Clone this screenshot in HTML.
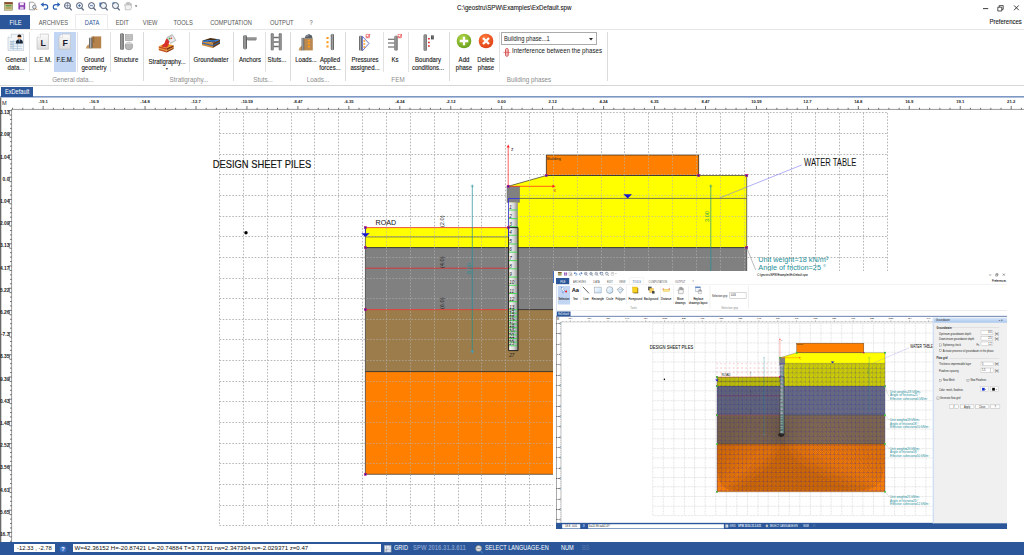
<!DOCTYPE html><html><head><meta charset="utf-8"><title>SPW - ExDefault.spw</title><style>html,body{margin:0;padding:0;}
body{width:1024px;height:555px;overflow:hidden;background:#fff;position:relative;font-family:"Liberation Sans",sans-serif;}
.app{position:absolute;left:0;top:0;width:1024px;height:555px;overflow:hidden;background:#fff;font-family:"Liberation Sans",sans-serif;color:#222;}
.cv{position:absolute;left:0;top:0;}
.abs{position:absolute;}
.top{position:absolute;left:0;top:0;width:1024px;height:29px;background:#fff;}
.qa{position:absolute;top:0;left:0;}
.title{position:absolute;left:456.5px;top:3px;font-size:7.2px;color:#161616;-webkit-text-stroke:0.1px #161616;white-space:nowrap;transform:scaleX(.86);transform-origin:0 50%;}
.tab{position:absolute;top:15px;height:14.6px;line-height:15.2px;font-size:7.2px;color:#555;text-align:center;white-space:nowrap;}
.tab span{display:inline-block;transform:scaleX(.8);transform-origin:50% 50%;margin:0 -10px;}
.tab.file{left:0;width:30.4px;background:#2b579a;color:#fff;height:14.2px;}
.tab.act{color:#2b579a;background:#fff;box-shadow:0 0 0 0.6px #dedede;height:15.2px;}
.pref{position:absolute;right:2.3px;top:17px;font-size:7.2px;color:#111;transform:scaleX(.83);transform-origin:100% 50%;-webkit-text-stroke:0.1px #111;}
.ribbon{position:absolute;left:0;top:29px;width:1024px;height:57px;background:#fff;border-top:1px solid #e6e6e6;border-bottom:1px solid #d6d6d6;box-sizing:border-box;}
.ri{position:absolute;top:2px;height:40px;text-align:center;font-size:7.2px;line-height:8px;color:#161616;white-space:nowrap;-webkit-text-stroke:0.12px #161616;}
.ri.hl{background:#c2d5f2;}
.ri svg{position:absolute;top:0;left:50%;}
.ri .lb{position:absolute;left:-20px;right:-20px;top:24px;text-align:center;transform:scaleX(.84);transform-origin:50% 50%;}
.sep{position:absolute;top:2.4px;width:0.7px;height:39.6px;background:#e2e2e2;}
.gsep{position:absolute;top:2.4px;width:0.7px;height:48.6px;background:#dcdcdc;}
.gl{position:absolute;top:45.6px;font-size:7px;color:#8c8c8c;white-space:nowrap;transform:translateX(-50%) scaleX(.9);}
.doctab{position:absolute;left:0.8px;top:86.6px;width:32.6px;height:10px;background:#2b579a;color:#fff;font-size:7px;line-height:10.2px;text-align:center;}
.doctab span{display:inline-block;transform:scaleX(.8);margin:0 -6px;}
.status{position:absolute;left:0;top:542.2px;width:1024px;height:12.8px;background:#2b579a;color:#fff;font-size:6.8px;line-height:12.6px;white-space:nowrap;}
.status span.abs{transform:scaleX(.82);transform-origin:0 50%;}
.sbox{position:absolute;top:2.1px;height:8px;background:#fff;color:#111;line-height:8.4px;font-size:5.2px;box-sizing:border-box;padding-left:1.2px;overflow:hidden;}
.insetwrap{position:absolute;left:552.7px;top:270.8px;width:471.3px;height:271.4px;background:#fff;overflow:hidden;}
.insetclip{position:absolute;left:3.7px;top:0.4px;width:451.2px;height:257.4px;overflow:hidden;}
.insetscale{position:absolute;left:0;top:0;width:1024px;height:555px;transform-origin:0 0;transform:scale(0.4406,0.4655);}
.sx{display:inline-block;transform:scaleX(.8);transform-origin:0 50%;white-space:nowrap;}
.insetscale .sbox{top:2.8px;height:8.6px;}
</style></head><body><div class="app"><svg class="cv" width="1024" height="555" viewBox="0 0 1024 555" font-family="'Liberation Sans', sans-serif"><defs><linearGradient id="pg" x1="0" x2="1" y1="0" y2="0"><stop offset="0" stop-color="#fbfbfb"/><stop offset="0.55" stop-color="#d8d8d8"/><stop offset="1" stop-color="#8a8a8a"/></linearGradient></defs><defs><clipPath id="sc"><path d="M365.4 227.6H508.2V186.3L546.3 175.5V155H698.7V175.5H746.7V474.3H365.4Z"/></clipPath><clipPath id="nsc"><path clip-rule="evenodd" d="M0 0H1024V555H0ZM365.4 227.6H508.2V186.3L546.3 175.5V155H698.7V175.5H746.7V474.3H365.4Z"/></clipPath></defs><rect x="365.4" y="227.6" width="143" height="20" fill="#ffff00"/><polygon points="508.2,186.3 546.3,175.5 746.7,175.5 746.7,247.6 508.2,247.6" fill="#ffff00"/><rect x="365.4" y="247.6" width="381.3" height="62" fill="#808080"/><rect x="365.4" y="309.6" width="381.3" height="62" fill="#9c7c4b"/><rect x="365.4" y="371.6" width="381.3" height="102.7" fill="#ff8000"/><rect x="546.3" y="155" width="152.4" height="20.5" fill="#ff8000" stroke="#3a3020" stroke-width="0.8"/><path d="M365.4 227.6V474.3H746.7V175.5H546.3L508.2 186.3" fill="none" stroke="#333" stroke-width="0.7"/><path d="M365.4 247.6H746.7M508 309.6H746.7M365.4 371.6H746.7" fill="none" stroke="#2a2a2a" stroke-width="0.9"/><path d="M365.4 227.6H508.4M365.4 268.2H508.4M365.4 309.6H508.4" fill="none" stroke="#e8262a" stroke-width="0.8"/><path d="M365.4 236.9H508.4M519.6 198.4H746.7" fill="none" stroke="#555" stroke-width="0.8"/><g clip-path="url(#nsc)"><path d="M219.5 112.9V525.7M243.5 112.9V525.7M267.5 112.9V525.7M291.5 112.9V525.7M314.5 112.9V525.7M338.5 112.9V525.7M362.5 112.9V525.7M386.5 112.9V525.7M410.5 112.9V525.7M434.5 112.9V525.7M458.5 112.9V525.7M481.5 112.9V525.7M505.5 112.9V525.7M529.5 112.9V525.7M553.5 112.9V525.7M577.5 112.9V525.7M601.5 112.9V525.7M624.5 112.9V525.7M648.5 112.9V525.7M672.5 112.9V525.7M696.5 112.9V525.7M720.5 112.9V525.7M744.5 112.9V525.7M768.5 112.9V525.7M791.5 112.9V525.7M815.5 112.9V525.7M839.5 112.9V525.7M863.5 112.9V525.7M887.5 112.9V525.7M219.5 112.5H887.3M219.5 133.5H887.3M219.5 154.5H887.3M219.5 174.5H887.3M219.5 195.5H887.3M219.5 216.5H887.3M219.5 236.5H887.3M219.5 257.5H887.3M219.5 278.5H887.3M219.5 298.5H887.3M219.5 319.5H887.3M219.5 339.5H887.3M219.5 360.5H887.3M219.5 381.5H887.3M219.5 401.5H887.3M219.5 422.5H887.3M219.5 443.5H887.3M219.5 463.5H887.3M219.5 484.5H887.3M219.5 505.5H887.3M219.5 525.5H887.3" fill="none" stroke="#b6b6b6" stroke-width="1" stroke-dasharray="1.6 1.6"/></g><g clip-path="url(#sc)" opacity="0.6"><path d="M219.5 112.9V525.7M243.5 112.9V525.7M267.5 112.9V525.7M291.5 112.9V525.7M314.5 112.9V525.7M338.5 112.9V525.7M362.5 112.9V525.7M386.5 112.9V525.7M410.5 112.9V525.7M434.5 112.9V525.7M458.5 112.9V525.7M481.5 112.9V525.7M505.5 112.9V525.7M529.5 112.9V525.7M553.5 112.9V525.7M577.5 112.9V525.7M601.5 112.9V525.7M624.5 112.9V525.7M648.5 112.9V525.7M672.5 112.9V525.7M696.5 112.9V525.7M720.5 112.9V525.7M744.5 112.9V525.7M768.5 112.9V525.7M791.5 112.9V525.7M815.5 112.9V525.7M839.5 112.9V525.7M863.5 112.9V525.7M887.5 112.9V525.7M219.5 112.5H887.3M219.5 133.5H887.3M219.5 154.5H887.3M219.5 174.5H887.3M219.5 195.5H887.3M219.5 216.5H887.3M219.5 236.5H887.3M219.5 257.5H887.3M219.5 278.5H887.3M219.5 298.5H887.3M219.5 319.5H887.3M219.5 339.5H887.3M219.5 360.5H887.3M219.5 381.5H887.3M219.5 401.5H887.3M219.5 422.5H887.3M219.5 443.5H887.3M219.5 463.5H887.3M219.5 484.5H887.3M219.5 505.5H887.3M219.5 525.5H887.3" fill="none" stroke="#b4b4b4" stroke-width="1" stroke-dasharray="1.6 1.6"/></g><rect x="507" y="186.4" width="12.6" height="16" fill="#808080" stroke="#6a6a6a" stroke-width="0.5"/><rect x="508.8" y="202.4" width="9" height="148.2" fill="url(#pg)"/><path d="M508.8 210H518M508.8 218.6H518M508.8 226.7H518M508.8 235.3H518M508.8 244H518M508.8 252.2H518M508.8 260.6H518M508.8 268.8H518M508.8 277.1H518M508.8 285.3H518M508.8 293.5H518M508.8 301.6H518M508.8 309.7H518M508.8 313.2H518M508.8 316.82H518M508.8 320.44H518M508.8 324.06H518M508.8 327.68H518M508.8 331.3H518M508.8 334.92H518M508.8 338.54H518M508.8 342.16H518M508.8 345.78H518" stroke="#43d84f" stroke-width="0.9" fill="none"/><text x="509.2" y="209" font-size="4.6" fill="#222" font-style="italic">1</text><text x="509.2" y="217.6" font-size="4.6" fill="#222" font-style="italic">2</text><text x="509.2" y="225.7" font-size="4.6" fill="#222" font-style="italic">3</text><text x="509.2" y="234.3" font-size="4.6" fill="#222" font-style="italic">4</text><text x="509.2" y="243" font-size="4.6" fill="#222" font-style="italic">5</text><text x="509.2" y="251.2" font-size="4.6" fill="#222" font-style="italic">6</text><text x="509.2" y="259.6" font-size="4.6" fill="#222" font-style="italic">7</text><text x="509.2" y="267.8" font-size="4.6" fill="#222" font-style="italic">8</text><text x="509.2" y="276.1" font-size="4.6" fill="#222" font-style="italic">9</text><text x="509.2" y="284.3" font-size="4.6" fill="#222" font-style="italic">10</text><text x="509.2" y="292.5" font-size="4.6" fill="#222" font-style="italic">11</text><text x="509.2" y="300.6" font-size="4.6" fill="#222" font-style="italic">12</text><text x="509.2" y="308.7" font-size="4.6" fill="#222" font-style="italic">13</text><text x="509.2" y="312.2" font-size="4.6" fill="#222" font-style="italic">14</text><text x="509.2" y="315.82" font-size="4.6" fill="#222" font-style="italic">15</text><text x="509.2" y="319.44" font-size="4.6" fill="#222" font-style="italic">16</text><text x="509.2" y="323.06" font-size="4.6" fill="#222" font-style="italic">17</text><text x="509.2" y="326.68" font-size="4.6" fill="#222" font-style="italic">18</text><text x="509.2" y="330.3" font-size="4.6" fill="#222" font-style="italic">19</text><text x="509.2" y="333.92" font-size="4.6" fill="#222" font-style="italic">20</text><text x="509.2" y="337.54" font-size="4.6" fill="#222" font-style="italic">21</text><text x="509.2" y="341.16" font-size="4.6" fill="#222" font-style="italic">22</text><text x="509.2" y="344.78" font-size="4.6" fill="#222" font-style="italic">23</text><text x="509.2" y="356.6" font-size="4.6" fill="#222" font-style="italic">27</text><path d="M508.6 227.6H518V350.6H508.6Z" fill="none" stroke="#111" stroke-width="0.9"/><path d="M519.6 198.5H508.5V237" fill="none" stroke="#2a2af0" stroke-width="0.8"/><path d="M508.2 186.3V146M508.2 186.3H553" stroke="#ff2020" stroke-width="0.7" fill="none"/><path d="M508.2 144.4l-1.5 3.2h3zM555.6 186.3l-3.2-1.5v3z" fill="#ff2020"/><text x="511" y="150.5" font-size="5" fill="#333">z</text><text x="553.5" y="192" font-size="5" fill="#c33">x</text><rect x="364.3" y="226.5" width="2.2" height="2.2" fill="#2020c0" stroke="#e01060" stroke-width="0.5"/><rect x="364.3" y="246.5" width="2.2" height="2.2" fill="#2020c0" stroke="#e01060" stroke-width="0.5"/><rect x="364.3" y="308.5" width="2.2" height="2.2" fill="#2020c0" stroke="#e01060" stroke-width="0.5"/><rect x="364.3" y="473.2" width="2.2" height="2.2" fill="#2020c0" stroke="#e01060" stroke-width="0.5"/><rect x="507.3" y="226.5" width="2.2" height="2.2" fill="#2020c0" stroke="#e01060" stroke-width="0.5"/><rect x="507.1" y="185.2" width="2.2" height="2.2" fill="#2020c0" stroke="#e01060" stroke-width="0.5"/><rect x="545.2" y="174.4" width="2.2" height="2.2" fill="#2020c0" stroke="#e01060" stroke-width="0.5"/><rect x="697.6" y="174.4" width="2.2" height="2.2" fill="#2020c0" stroke="#e01060" stroke-width="0.5"/><rect x="745.6" y="174.4" width="2.2" height="2.2" fill="#2020c0" stroke="#e01060" stroke-width="0.5"/><rect x="745.6" y="246.5" width="2.2" height="2.2" fill="#2020c0" stroke="#e01060" stroke-width="0.5"/><path d="M361.2 233.2h8.6l-4.3 3.7z" fill="#1515d8"/><path d="M365.5 228.5v4.5" stroke="#1515d8" stroke-width="0.6"/><path d="M623.4 194.3h8.6l-4.3 4.1z" fill="#1515d8"/><path d="M472.3 186V351M710.8 186V303" stroke="#1d8f99" stroke-width="0.7" fill="none"/><path d="M470.8 186h3M472.3 184.4v3M709.3 186h3M710.8 184.4v3" stroke="#1d8f99" stroke-width="0.5" fill="none"/><path d="M472.3 353.4l-1.6-2.6h3.2z" fill="#3aa0d0"/><text transform="translate(470.6 274) rotate(-90)" font-size="5.6" fill="#1d8f99">8.00</text><text transform="translate(708.6 222) rotate(-90)" font-size="5.6" fill="#2a9a50">3.00</text><text transform="translate(443.6 227) rotate(-90)" font-size="5.6" fill="#222">(2.0)</text><text transform="translate(443.6 268) rotate(-90)" font-size="5.6" fill="#222">(4.0)</text><text transform="translate(443.6 309) rotate(-90)" font-size="5.6" fill="#222">(6.0)</text><text x="212.7" y="168.2" font-size="10.8" textLength="98.6" lengthAdjust="spacingAndGlyphs" fill="#111" stroke="#111" stroke-width="0.15">DESIGN SHEET PILES</text><text x="804" y="165.9" font-size="10.6" textLength="52.4" lengthAdjust="spacingAndGlyphs" fill="#111">WATER TABLE</text><text x="375.6" y="224.8" font-size="7.6" textLength="20.6" lengthAdjust="spacingAndGlyphs" fill="#111">ROAD</text><text x="547" y="160" font-size="3.9" fill="#222">Building</text><circle cx="246" cy="232.8" r="1.7" fill="#000"/><path d="M719.6 198L801.6 165" stroke="#7a7af0" stroke-width="0.6" fill="none"/><path d="M746.7 247.6L755.6 269.8" stroke="#777" stroke-width="0.5" fill="none"/><text x="758.3" y="261.7" font-size="7.3" fill="#1d8f99">Unit weight=18 kN/m³</text><text x="758.3" y="269.5" font-size="7.3" fill="#1d8f99">Angle of friction=25 °</text></svg><svg class="cv" width="1024" height="555" viewBox="0 0 1024 555" font-family="'Liberation Sans', sans-serif"><rect x="0" y="96.2" width="1024" height="1.3" fill="#5f7fb8"/><rect x="0" y="97.5" width="1.3" height="445" fill="#6a6a6a"/><path d="M11.6 542V109.4H1024" fill="none" stroke="#555" stroke-width="0.6"/><path d="M12.58 107.8V109.4M22.77 107.8V109.4M32.96 107.8V109.4M43.15 106V109.4M53.34 107.8V109.4M63.53 107.8V109.4M73.72 107.8V109.4M83.91 107.8V109.4M94.1 106V109.4M104.29 107.8V109.4M114.48 107.8V109.4M124.67 107.8V109.4M134.86 107.8V109.4M145.05 106V109.4M155.24 107.8V109.4M165.43 107.8V109.4M175.62 107.8V109.4M185.81 107.8V109.4M196 106V109.4M206.19 107.8V109.4M216.38 107.8V109.4M226.57 107.8V109.4M236.76 107.8V109.4M246.95 106V109.4M257.14 107.8V109.4M267.33 107.8V109.4M277.52 107.8V109.4M287.71 107.8V109.4M297.9 106V109.4M308.09 107.8V109.4M318.28 107.8V109.4M328.47 107.8V109.4M338.66 107.8V109.4M348.85 106V109.4M359.04 107.8V109.4M369.23 107.8V109.4M379.42 107.8V109.4M389.61 107.8V109.4M399.8 106V109.4M409.99 107.8V109.4M420.18 107.8V109.4M430.37 107.8V109.4M440.56 107.8V109.4M450.75 106V109.4M460.94 107.8V109.4M471.13 107.8V109.4M481.32 107.8V109.4M491.51 107.8V109.4M501.7 106V109.4M511.89 107.8V109.4M522.08 107.8V109.4M532.27 107.8V109.4M542.46 107.8V109.4M552.65 106V109.4M562.84 107.8V109.4M573.03 107.8V109.4M583.22 107.8V109.4M593.41 107.8V109.4M603.6 106V109.4M613.79 107.8V109.4M623.98 107.8V109.4M634.17 107.8V109.4M644.36 107.8V109.4M654.55 106V109.4M664.74 107.8V109.4M674.93 107.8V109.4M685.12 107.8V109.4M695.31 107.8V109.4M705.5 106V109.4M715.69 107.8V109.4M725.88 107.8V109.4M736.07 107.8V109.4M746.26 107.8V109.4M756.45 106V109.4M766.64 107.8V109.4M776.83 107.8V109.4M787.02 107.8V109.4M797.21 107.8V109.4M807.4 106V109.4M817.59 107.8V109.4M827.78 107.8V109.4M837.97 107.8V109.4M848.16 107.8V109.4M858.35 106V109.4M868.54 107.8V109.4M878.73 107.8V109.4M888.92 107.8V109.4M899.11 107.8V109.4M909.3 106V109.4M919.49 107.8V109.4M929.68 107.8V109.4M939.87 107.8V109.4M950.06 107.8V109.4M960.25 106V109.4M970.44 107.8V109.4M980.63 107.8V109.4M990.82 107.8V109.4M1001.01 107.8V109.4M1011.2 106V109.4M1021.39 107.8V109.4" stroke="#333" stroke-width="0.7" fill="none"/><text x="43.15" y="103.2" font-size="4.2" font-weight="bold" text-anchor="middle" fill="#222">-19.1</text><text x="94.1" y="103.2" font-size="4.2" font-weight="bold" text-anchor="middle" fill="#222">-16.9</text><text x="145.05" y="103.2" font-size="4.2" font-weight="bold" text-anchor="middle" fill="#222">-14.8</text><text x="196" y="103.2" font-size="4.2" font-weight="bold" text-anchor="middle" fill="#222">-12.7</text><text x="246.95" y="103.2" font-size="4.2" font-weight="bold" text-anchor="middle" fill="#222">-10.59</text><text x="297.9" y="103.2" font-size="4.2" font-weight="bold" text-anchor="middle" fill="#222">-8.47</text><text x="348.85" y="103.2" font-size="4.2" font-weight="bold" text-anchor="middle" fill="#222">-6.35</text><text x="399.8" y="103.2" font-size="4.2" font-weight="bold" text-anchor="middle" fill="#222">-4.24</text><text x="450.75" y="103.2" font-size="4.2" font-weight="bold" text-anchor="middle" fill="#222">-2.12</text><text x="501.7" y="103.2" font-size="4.2" font-weight="bold" text-anchor="middle" fill="#222">0.00</text><text x="552.65" y="103.2" font-size="4.2" font-weight="bold" text-anchor="middle" fill="#222">2.12</text><text x="603.6" y="103.2" font-size="4.2" font-weight="bold" text-anchor="middle" fill="#222">4.24</text><text x="654.55" y="103.2" font-size="4.2" font-weight="bold" text-anchor="middle" fill="#222">6.35</text><text x="705.5" y="103.2" font-size="4.2" font-weight="bold" text-anchor="middle" fill="#222">8.47</text><text x="756.45" y="103.2" font-size="4.2" font-weight="bold" text-anchor="middle" fill="#222">10.59</text><text x="807.4" y="103.2" font-size="4.2" font-weight="bold" text-anchor="middle" fill="#222">12.7</text><text x="858.35" y="103.2" font-size="4.2" font-weight="bold" text-anchor="middle" fill="#222">14.8</text><text x="909.3" y="103.2" font-size="4.2" font-weight="bold" text-anchor="middle" fill="#222">16.9</text><text x="960.25" y="103.2" font-size="4.2" font-weight="bold" text-anchor="middle" fill="#222">19.1</text><text x="1011.2" y="103.2" font-size="4.2" font-weight="bold" text-anchor="middle" fill="#222">21.2</text><text x="2" y="104.6" font-size="5.6" fill="#222">M</text><text x="9.4" y="114.1" font-size="4.9" font-weight="bold" text-anchor="end" fill="#222">3.13</text><path d="M9.4 110.8v4.5" stroke="#333" stroke-width="0.5"/><text x="9.4" y="136.3" font-size="4.9" font-weight="bold" text-anchor="end" fill="#222">2.09</text><path d="M9.4 133v4.5" stroke="#333" stroke-width="0.5"/><text x="9.4" y="158.5" font-size="4.9" font-weight="bold" text-anchor="end" fill="#222">1.04</text><path d="M9.4 155.2v4.5" stroke="#333" stroke-width="0.5"/><text x="9.4" y="180.7" font-size="4.9" font-weight="bold" text-anchor="end" fill="#222">0.0</text><path d="M9.4 177.4v4.5" stroke="#333" stroke-width="0.5"/><text x="9.4" y="202.9" font-size="4.9" font-weight="bold" text-anchor="end" fill="#222">-1.04</text><path d="M9.4 199.6v4.5" stroke="#333" stroke-width="0.5"/><text x="9.4" y="225.1" font-size="4.9" font-weight="bold" text-anchor="end" fill="#222">-2.09</text><path d="M9.4 221.8v4.5" stroke="#333" stroke-width="0.5"/><text x="9.4" y="247.3" font-size="4.9" font-weight="bold" text-anchor="end" fill="#222">-3.13</text><path d="M9.4 244v4.5" stroke="#333" stroke-width="0.5"/><text x="9.4" y="269.5" font-size="4.9" font-weight="bold" text-anchor="end" fill="#222">-4.17</text><path d="M9.4 266.2v4.5" stroke="#333" stroke-width="0.5"/><text x="9.4" y="291.7" font-size="4.9" font-weight="bold" text-anchor="end" fill="#222">-5.22</text><path d="M9.4 288.4v4.5" stroke="#333" stroke-width="0.5"/><text x="9.4" y="313.9" font-size="4.9" font-weight="bold" text-anchor="end" fill="#222">-6.26</text><path d="M9.4 310.6v4.5" stroke="#333" stroke-width="0.5"/><text x="9.4" y="336.1" font-size="4.9" font-weight="bold" text-anchor="end" fill="#222">-7.3</text><path d="M9.4 332.8v4.5" stroke="#333" stroke-width="0.5"/><text x="9.4" y="358.3" font-size="4.9" font-weight="bold" text-anchor="end" fill="#222">-8.35</text><path d="M9.4 355v4.5" stroke="#333" stroke-width="0.5"/><text x="9.4" y="380.5" font-size="4.9" font-weight="bold" text-anchor="end" fill="#222">-9.39</text><path d="M9.4 377.2v4.5" stroke="#333" stroke-width="0.5"/><text x="9.4" y="402.7" font-size="4.9" font-weight="bold" text-anchor="end" fill="#222">-10.43</text><path d="M9.4 399.4v4.5" stroke="#333" stroke-width="0.5"/><text x="9.4" y="424.9" font-size="4.9" font-weight="bold" text-anchor="end" fill="#222">-11.48</text><path d="M9.4 421.6v4.5" stroke="#333" stroke-width="0.5"/><text x="9.4" y="447.1" font-size="4.9" font-weight="bold" text-anchor="end" fill="#222">-12.52</text><path d="M9.4 443.8v4.5" stroke="#333" stroke-width="0.5"/><text x="9.4" y="469.3" font-size="4.9" font-weight="bold" text-anchor="end" fill="#222">-13.56</text><path d="M9.4 466v4.5" stroke="#333" stroke-width="0.5"/><text x="9.4" y="491.5" font-size="4.9" font-weight="bold" text-anchor="end" fill="#222">-14.61</text><path d="M9.4 488.2v4.5" stroke="#333" stroke-width="0.5"/><text x="9.4" y="513.7" font-size="4.9" font-weight="bold" text-anchor="end" fill="#222">-15.65</text><path d="M9.4 510.4v4.5" stroke="#333" stroke-width="0.5"/><text x="9.4" y="535.9" font-size="4.9" font-weight="bold" text-anchor="end" fill="#222">-16.7</text><path d="M9.4 532.6v4.5" stroke="#333" stroke-width="0.5"/><path d="M8.6 110.6H11.6M10 115.04H11.6M10 119.48H11.6M10 123.92H11.6M10 128.36H11.6M8.6 132.8H11.6M10 137.24H11.6M10 141.68H11.6M10 146.12H11.6M10 150.56H11.6M8.6 155H11.6M10 159.44H11.6M10 163.88H11.6M10 168.32H11.6M10 172.76H11.6M8.6 177.2H11.6M10 181.64H11.6M10 186.08H11.6M10 190.52H11.6M10 194.96H11.6M8.6 199.4H11.6M10 203.84H11.6M10 208.28H11.6M10 212.72H11.6M10 217.16H11.6M8.6 221.6H11.6M10 226.04H11.6M10 230.48H11.6M10 234.92H11.6M10 239.36H11.6M8.6 243.8H11.6M10 248.24H11.6M10 252.68H11.6M10 257.12H11.6M10 261.56H11.6M8.6 266H11.6M10 270.44H11.6M10 274.88H11.6M10 279.32H11.6M10 283.76H11.6M8.6 288.2H11.6M10 292.64H11.6M10 297.08H11.6M10 301.52H11.6M10 305.96H11.6M8.6 310.4H11.6M10 314.84H11.6M10 319.28H11.6M10 323.72H11.6M10 328.16H11.6M8.6 332.6H11.6M10 337.04H11.6M10 341.48H11.6M10 345.92H11.6M10 350.36H11.6M8.6 354.8H11.6M10 359.24H11.6M10 363.68H11.6M10 368.12H11.6M10 372.56H11.6M8.6 377H11.6M10 381.44H11.6M10 385.88H11.6M10 390.32H11.6M10 394.76H11.6M8.6 399.2H11.6M10 403.64H11.6M10 408.08H11.6M10 412.52H11.6M10 416.96H11.6M8.6 421.4H11.6M10 425.84H11.6M10 430.28H11.6M10 434.72H11.6M10 439.16H11.6M8.6 443.6H11.6M10 448.04H11.6M10 452.48H11.6M10 456.92H11.6M10 461.36H11.6M8.6 465.8H11.6M10 470.24H11.6M10 474.68H11.6M10 479.12H11.6M10 483.56H11.6M8.6 488H11.6M10 492.44H11.6M10 496.88H11.6M10 501.32H11.6M10 505.76H11.6M8.6 510.2H11.6M10 514.64H11.6M10 519.08H11.6M10 523.52H11.6M10 527.96H11.6M8.6 532.4H11.6M10 536.84H11.6M10 541.28H11.6" stroke="#333" stroke-width="0.7" fill="none"/></svg><div class="top"><svg class="qa" width="145" height="14" viewBox="0 0 145 14"><rect x="4.6" y="2.6" width="8" height="7.6" fill="#c9d29a" stroke="#7a6a3a" stroke-width="0.5"/><rect x="4.6" y="2.2" width="8" height="2" fill="#8a4a2a"/><rect x="5.6" y="5.2" width="6" height="1.2" fill="#4a8a3a"/><rect x="5.6" y="7.4" width="6" height="1.2" fill="#b08040"/><rect x="18.4" y="2.6" width="6.8" height="7" rx="0.6" fill="#8a3fb0"/><rect x="19.8" y="2.6" width="4" height="2.6" fill="#f0e8f6"/><rect x="20" y="6.8" width="3.6" height="2.8" fill="#d9c6e6"/><path d="M29.4 2.2h4l1.6 1.6v6h-5.6z" fill="#fafafa" stroke="#666" stroke-width="0.6"/><circle cx="34.4" cy="7" r="1.8" fill="#dfe8f5" stroke="#555" stroke-width="0.6"/><path d="M35.6 8.4l1.6 1.6" stroke="#d07020" stroke-width="0.9"/><path d="M42 4.6h3.4a2.3 2.3 0 0 1 0 4.6h-1.4" fill="none" stroke="#2b62b5" stroke-width="1.2"/><path d="M40.6 4.6l3-2.4v4.8z" fill="#2b62b5"/><path d="M59 4.6h-3.4a2.3 2.3 0 0 0 0 4.6h1.4" fill="none" stroke="#2b62b5" stroke-width="1.2"/><path d="M60.4 4.6l-3-2.4v4.8z" fill="#2b62b5"/><circle cx="67.5" cy="5.6" r="3" fill="#eef2f8" stroke="#4f5a6c" stroke-width="1"/><path d="M69.4 7.8l2.3 2.6" stroke="#5c6b82" stroke-width="1.3"/><path d="M64.8 5.6h5.4M67.5 2.9v5.4" stroke="#5c6b82" stroke-width="0.6"/><circle cx="79.5" cy="5.6" r="3" fill="#eef2f8" stroke="#4f5a6c" stroke-width="1"/><path d="M81.4 7.8l2.3 2.6" stroke="#5c6b82" stroke-width="1.3"/><path d="M78 5.6h3M79.5 4.1v3" stroke="#2b579a" stroke-width="0.7"/><circle cx="91.5" cy="5.6" r="3" fill="#eef2f8" stroke="#4f5a6c" stroke-width="1"/><path d="M93.4 7.8l2.3 2.6" stroke="#5c6b82" stroke-width="1.3"/><path d="M90 5.6h3" stroke="#2b579a" stroke-width="0.7"/><rect x="99.4" y="2.6" width="6.4" height="4" fill="#3b6bb5"/><circle cx="103.5" cy="5.6" r="3" fill="#eef2f8" stroke="#4f5a6c" stroke-width="1"/><path d="M105.4 7.8l2.3 2.6" stroke="#5c6b82" stroke-width="1.3"/><path d="M111.6 3l3 -1v3z" fill="#3b6bb5"/><circle cx="115.5" cy="5.6" r="3" fill="#eef2f8" stroke="#4f5a6c" stroke-width="1"/><path d="M117.4 7.8l2.3 2.6" stroke="#5c6b82" stroke-width="1.3"/><path d="M125.2 9.8v-3.4l-1-1.4 0.6-0.5 1.2 1v-2.6h1v2.2h0.5v-2.8h1v2.8h0.5v-2.4h1v2.6h0.5v-1.6h0.9v4.2l-0.8 1.9z" fill="#f2f2f2" stroke="#9a9a9a" stroke-width="0.5"/><path d="M134.8 5.6h2.6l-1.3 1.5z" fill="#444"/></svg><div class="title">C:\geostru\SPW\Examples\ExDefault.spw</div><svg class="abs" style="left:980px;top:3px" width="42" height="10" viewBox="0 0 42 10"><path d="M3 5.600h5.200" stroke="#2a2a2a" stroke-width="0.9"/><path d="M17.800 4.200h4v3.800h-4zM19.200 4.200v-1.600h4v3.800h-1.400" fill="none" stroke="#2a2a2a" stroke-width="0.8"/><path d="M34 2.400l4.800 4.800M38.800 2.400l-4.800 4.800" stroke="#2a2a2a" stroke-width="0.9"/></svg><div class="tab file" style="left:0px;width:30.4px"><span>FILE</span></div><div class="tab" style="left:33px;width:41px"><span>ARCHIVES</span></div><div class="tab act" style="left:76.2px;width:31px"><span>DATA</span></div><div class="tab" style="left:110px;width:23.4px"><span>EDIT</span></div><div class="tab" style="left:139px;width:23px"><span>VIEW</span></div><div class="tab" style="left:168px;width:31px"><span>TOOLS</span></div><div class="tab" style="left:201px;width:61px"><span>COMPUTATION</span></div><div class="tab" style="left:262px;width:40px"><span>OUTPUT</span></div><div class="tab" style="left:305px;width:12px"><span>?</span></div><div class="pref">Preferences</div></div><div class="ribbon"><svg width="0" height="0" style="position:absolute"><defs><linearGradient id="cyl" x1="0" x2="1"><stop offset="0" stop-color="#4e4e4e"/><stop offset="0.45" stop-color="#adadad"/><stop offset="1" stop-color="#4a4a4a"/></linearGradient><linearGradient id="lg" x1="0" x2="0" y1="0" y2="1"><stop offset="0" stop-color="#fcfcfc"/><stop offset="1" stop-color="#dcdcdc"/></linearGradient><radialGradient id="gr" cx="0.4" cy="0.3" r="0.8"><stop offset="0" stop-color="#b4d84a"/><stop offset="1" stop-color="#5f9a16"/></radialGradient><radialGradient id="rd" cx="0.4" cy="0.3" r="0.8"><stop offset="0" stop-color="#ff7a3a"/><stop offset="1" stop-color="#dc3a12"/></radialGradient></defs></svg><div class="ri" style="left:2.6px;width:26px"><svg style="top:-0.4px;margin-left:-9px" width="18" height="20" viewBox="0 0 18 20" ><path d="M4.400 2.200h12.200v16.200h-15.600v-12.800z" fill="#f3f6f9" stroke="#b4c0cc" stroke-width="0.600"/><path d="M4.400 2.200v3.400h-3.400" fill="#fff" stroke="#b4c0cc" stroke-width="0.500"/><path d="M2.600 9.400h12.400M2.600 11.800h12.400M2.600 14.200h12.400M2.600 16.600h12.400M6.400 8.400v9.400M10.400 8.400v9.400" stroke="#a4c0dc" stroke-width="0.700"/><path d="M3 10.200h3M3 12.600h3M3 15h3" stroke="#8a98a8" stroke-width="0.600"/><circle cx="12.400" cy="5.200" r="1.900" fill="#e9b48c"/><path d="M10.400 4.600a2 2 0 0 1 4 0l-0.300 0.300h-3.400z" fill="#2a1c14"/><path d="M8.800 11.400c0-3 1.300-4.200 3.600-4.200s3.600 1.200 3.600 4.200z" fill="#1f2a3a"/><path d="M11.700 7.400l0.700 2.600 0.700-2.600z" fill="#fff"/><path d="M12.200 7.800h0.500l0.200 2-0.450 0.600-0.450-0.600z" fill="#2b62b5"/></svg><div class="lb">General<br>data...</div></div><div class="sep" style="left:29.3px"></div><div class="ri" style="left:32.6px;width:20px"><svg style="top:1.4px;margin-left:-7px" width="14" height="17.5" viewBox="0 0 15 19"><path d="M4.800 1.200h8.600v16.400h-12.400v-12.800z" fill="url(#lg)" stroke="#c0c0c0" stroke-width="0.700"/><path d="M4.800 1.200v3.600h-3.800" fill="#fff" stroke="#c0c0c0" stroke-width="0.500"/><text x="7.600" y="14.200" font-size="9.600" font-weight="bold" text-anchor="middle" fill="#1c1c30" font-family="'Liberation Sans', sans-serif">L</text></svg><div class="lb">L.E.M.</div></div><div class="ri hl" style="left:54px;width:22px"><svg style="top:1.4px;margin-left:-7px" width="14" height="17.5" viewBox="0 0 15 19"><path d="M4.800 1.200h8.600v16.400h-12.400v-12.800z" fill="url(#lg)" stroke="#c0c0c0" stroke-width="0.700"/><path d="M4.800 1.200v3.600h-3.800" fill="#fff" stroke="#c0c0c0" stroke-width="0.500"/><text x="7.600" y="14.200" font-size="9.600" font-weight="bold" text-anchor="middle" fill="#1c1c30" font-family="'Liberation Sans', sans-serif">F</text></svg><div class="lb">F.E.M.</div></div><div class="sep" style="left:77.3px"></div><div class="ri" style="left:79px;width:30px"><svg style="top:0.6px;margin-left:-9px" width="18" height="18" viewBox="0 0 18 18" ><path d="M6.600 3.400h9.600v12h-9.600z" fill="#b4824a"/><path d="M0.8 15.4c0.6-2.6 2-4 4.8-4.4v4.4z" fill="#c89a62"/><rect x="4" y="4.400" width="3.400" height="11" rx="1.200" fill="url(#cyl)"/><path d="M8.400 3.600c1.400 2.400-0.600 3.400 0.800 6" stroke="#7a5020" stroke-width="0.600" fill="none"/></svg><div class="lb">Ground<br>geometry</div></div><div class="sep" style="left:110.3px"></div><div class="ri" style="left:111.4px;width:30px"><svg style="top:-0.4px;margin-left:-8px" width="16" height="20" viewBox="0 0 16 20" ><rect x="2.200" y="1" width="3.600" height="17" rx="1.600" fill="url(#cyl)"/><rect x="7.400" y="2.600" width="7" height="6" fill="#c4c4c4" stroke="#8e8e8e" stroke-width="0.500"/><path d="M7.400 4.600h7M7.400 6.600h7" stroke="#a8a8a8" stroke-width="0.400"/><circle cx="10.900" cy="14" r="3.900" fill="#b8b8b8" stroke="#8a8a8a" stroke-width="0.500"/><path d="M7 11h8" stroke="#fff" stroke-width="0.900"/></svg><div class="lb">Structure</div></div><div class="gsep" style="left:143px"></div><div class="ri" style="left:147px;width:40px"><svg style="top:-0.2px;margin-left:-10px" width="20" height="21" viewBox="0 0 20 21" ><path d="M1.800 14.200l6.400-2.600 8.400 1.600-6.800 2.800z" fill="#f5a21e"/><path d="M1.800 14.200v4l8 2.400v-4.600z" fill="#c8501c"/><path d="M9.800 16l6.800-2.800v3.800l-6.800 3.600z" fill="#8a3210"/><path d="M1.800 16.200l8 2.400 6.800-3.200" stroke="#f7c85a" stroke-width="0.800" fill="none"/><path d="M4.600 14.400c0.400-1.400 1.600-1.800 2.400-2.600 1-1 1.200-3.400 2.400-5.400l3.600 1.600c-1.200 1.800-1 4-1.600 5.400-0.400 1-1.400 1.200-1.800 2.200z" fill="#d83228"/><path d="M9.800 5.600l5.400-3 3.600 5.800-5.200 3z" fill="#ececec" stroke="#8e8e8e" stroke-width="0.600"/><path d="M11.200 6l3.800-2.100" stroke="#9a9a9a" stroke-width="0.500"/><circle cx="12.600" cy="6.600" r="0.900" fill="#3ab03a"/><circle cx="14.400" cy="6.200" r="0.800" fill="#e03030"/></svg><div class="lb" style="top:26px">Stratigraphy...<br><span style="font-size:4px;position:relative;top:-2.4px">&#9662;</span></div></div><div class="sep" style="left:189.3px"></div><div class="ri" style="left:191px;width:40px"><svg style="top:3.6px;margin-left:-10px" width="20" height="14" viewBox="0 0 20 14" ><path d="M1 4.800l8.400-2.800 9.600 1.400-7.200 3.400z" fill="#4a2e14"/><path d="M1 4.800v4.400l10.800 2.800v-5.200z" fill="#c98a3c"/><path d="M11.800 6.800l7.200-3.400v4.400l-7.200 4.200z" fill="#6a3e16"/><path d="M2 5.200c3 0.800 4.600-1.200 7.600-0.400s4.400 0.200 8-1" stroke="#2f7ad6" stroke-width="1.500" fill="none"/><path d="M1 7l10.800 2.600 7.200-3.600" stroke="#2a64b4" stroke-width="1" fill="none"/></svg><div class="lb">Groundwater</div></div><div class="gsep" style="left:233.3px"></div><div class="ri" style="left:235.6px;width:28px"><svg style="top:-0.4px;margin-left:-8px" width="16" height="20" viewBox="0 0 16 20" ><rect x="1.200" y="3" width="3.800" height="14.400" rx="1.600" fill="url(#cyl)"/><rect x="5" y="5.200" width="9.600" height="3.200" rx="0.800" fill="#8a8a8a"/><rect x="5" y="5.200" width="9.600" height="1.200" fill="#a8a8a8"/></svg><div class="lb">Anchors</div></div><div class="sep" style="left:265.3px"></div><div class="ri" style="left:266.8px;width:20px"><svg style="top:-0.4px;margin-left:-6.5px" width="13" height="20" viewBox="0 0 13 20" ><rect x="0.8" y="1" width="2.800" height="17.400" rx="1.200" fill="url(#cyl)"/><rect x="8.800" y="1" width="2.800" height="17.400" rx="1.200" fill="url(#cyl)"/><path d="M3.600 5.400h5.200M3.600 10h5.200M3.600 14.600h5.200" stroke="#6c6c6c" stroke-width="1.500"/></svg><div class="lb">Stuts...</div></div><div class="gsep" style="left:290px"></div><div class="ri" style="left:294.4px;width:24px"><svg style="top:1.2px;margin-left:-8.5px" width="17" height="19" viewBox="0 0 17 19" ><path d="M0.600 17.400c0.500-2.800 1.800-4.200 4-4.600v4.600z" fill="#c89a62"/><path d="M5.800 5.400h9v12h-9z" fill="#b98950"/><path d="M6.400 5.400l1.400-2.800 3-1.600 3 1.600 0.800 2.800z" fill="#5a5f68"/><path d="M8.400 3.400l2.400-1.200" stroke="#cfd4dc" stroke-width="0.600"/><rect x="3.600" y="4.800" width="2.600" height="12.600" fill="url(#cyl)"/><path d="M9.800 7.600h2.200M9.800 10.600h2.200M9.800 13.600h2.200" stroke="#ff9a1e" stroke-width="1.700"/></svg><div class="lb">Loads...</div></div><div class="ri" style="left:317.4px;width:26px"><svg style="top:1.2px;margin-left:-5px" width="10" height="19" viewBox="0 0 10 19" ><rect x="5.800" y="0.800" width="3.200" height="16.400" rx="1.500" fill="url(#cyl)"/><path d="M1.400 5h2.200M1.400 9.200h2.200M1.400 13.400h2.200" stroke="#ff9a1e" stroke-width="2"/></svg><div class="lb">Applied<br>forces...</div></div><div class="gsep" style="left:345px"></div><div class="ri" style="left:347.8px;width:34px"><svg style="top:1.2px;margin-left:-6.5px" width="13" height="19" viewBox="0 0 13 19" ><rect x="1" y="2.600" width="3.200" height="15.200" rx="1.500" fill="url(#cyl)"/><path d="M4.400 3.400l6.600 7-6.600 7.400z" fill="#fff" stroke="#2a3ab0" stroke-width="0.700"/><path d="M5.400 8h1.800M5.400 11h1.800M5.400 14h1.800" stroke="#ff9a1e" stroke-width="1.600"/><path d="M8 1.400h3.400v3.400h-3.400z" fill="none" stroke="#e02020" stroke-width="0.500"/><path d="M8.400 3l1.200 1.400 2.400-3.200" stroke="#e02020" stroke-width="0.700" fill="none"/></svg><div class="lb">Pressures<br>assigned...</div></div><div class="sep" style="left:382.5px"></div><div class="ri" style="left:384.8px;width:20px"><svg style="top:1.2px;margin-left:-7.5px" width="15" height="19" viewBox="0 0 15 19" ><rect x="7.400" y="2.600" width="3.200" height="15.200" rx="1.500" fill="url(#cyl)"/><path d="M1 6.200h6.400M1 10h6.400M1 14h6.400" stroke="#555" stroke-width="1.100"/><path d="M11 1.400h3.400v3.400h-3.400z" fill="none" stroke="#e02020" stroke-width="0.500"/><path d="M11.400 3l1.200 1.400 2.400-3.200" stroke="#e02020" stroke-width="0.700" fill="none"/></svg><div class="lb">Ks</div></div><div class="sep" style="left:407.5px"></div><div class="ri" style="left:410px;width:36px"><svg style="top:1.2px;margin-left:-6.5px" width="13" height="19" viewBox="0 0 13 19" ><rect x="1.600" y="1" width="3.200" height="17" rx="1.500" fill="url(#cyl)"/><path d="M6 5.800h1.800M6 9.400h1.800M6 13h1.800" stroke="#e82a2a" stroke-width="1.500"/><rect x="9" y="2.400" width="2.800" height="4" fill="#444"/><path d="M9.600 3.600h1.600M9.600 5h1.600" stroke="#ddd" stroke-width="0.400"/></svg><div class="lb">Boundary<br>conditions...</div></div><div class="gsep" style="left:449px"></div><div class="ri" style="left:452.8px;width:22px"><svg style="top:0.6px;margin-left:-8px" width="16" height="16" viewBox="0 0 17 17"><circle cx="8.500" cy="8.500" r="7.800" fill="url(#gr)"/><path d="M8.500 4v9M4 8.500h9" stroke="#fff" stroke-width="2.400"/></svg><div class="lb">Add<br>phase</div></div><div class="ri" style="left:475px;width:22px"><svg style="top:0.6px;margin-left:-8px" width="16" height="16" viewBox="0 0 17 17"><circle cx="8.500" cy="8.500" r="7.800" fill="url(#rd)"/><path d="M5.300 5.300l6.400 6.400M11.700 5.300l-6.400 6.400" stroke="#fff" stroke-width="2.400"/></svg><div class="lb">Delete<br>phase</div></div><div class="sep" style="left:498.7px"></div><div class="abs" style="left:501px;top:2.2px;width:95.6px;height:13px;border:0.7px solid #ababab;box-sizing:border-box;font-size:7.2px;line-height:11.400px;padding-left:1.600px;color:#161616"><span class="sx">Building phase...1</span><svg class="abs" style="right:2.400px;top:4.800px" width="4" height="3" viewBox="0 0 4 3"><path d="M0 0h4l-2 2.400z" fill="#222"/></svg></div><svg class="abs" style="left:502.600px;top:17.600px" width="8" height="9" viewBox="0 0 8 9"><rect x="2.600" y="0.600" width="2.600" height="7.600" rx="1" fill="none" stroke="#c02020" stroke-width="0.800"/><path d="M0.400 4.400h7M4 1.400v6" stroke="#e04040" stroke-width="0.600"/></svg><div class="abs sx" style="left:511.800px;top:17px;font-size:7.200px;line-height:8px;color:#161616;transform:scaleX(.86)">Interference between the phases</div><div class="gsep" style="left:607.300px"></div><div class="gl" style="left:72.6px">General data...</div><div class="gl" style="left:188.8px">Stratigraphy...</div><div class="gl" style="left:262.8px">Stuts...</div><div class="gl" style="left:318px">Loads...</div><div class="gl" style="left:398px">FEM</div><div class="gl" style="left:528.8px">Building phases</div></div><div class="doctab"><span>ExDefault</span></div><div class="status"><div class="sbox" style="left:13.800px;width:41.200px;text-align:center;padding:0;font-size:5.85px">-12.33 , -2.78</div><svg class="abs" style="left:59px;top:2.400px" width="8" height="8" viewBox="0 0 8 8"><circle cx="4" cy="4" r="3.700" fill="#3f74c6" stroke="#234a86" stroke-width="0.400"/><text x="4" y="6.100" font-size="5.600" font-weight="bold" text-anchor="middle" fill="#fff" font-family="'Liberation Sans', sans-serif">?</text></svg><div class="sbox" style="left:73.200px;width:307.400px;font-size:6.1px">W=42.36152 H=-20.87421 L=-20.74884 T=3.71731 rw=2.347394 rs=-2.029371 z=0.47</div><svg class="abs" style="left:384.400px;top:2.800px" width="8" height="8" viewBox="0 0 8 8"><rect x="0.300" y="0.300" width="6.800" height="6.800" fill="#e9edf4" stroke="#8a96a8" stroke-width="0.500"/><path d="M1 6.400l5.400-5.400M2.400 0.400v6.600M0.400 4.800h6.600" stroke="#8a96a8" stroke-width="0.500"/></svg><span class="abs" style="left:394.300px">GRID</span><span class="abs" style="left:412.800px;color:#7f99c8;font-weight:bold;transform:scaleX(.875)">SPW 2016.31.3.611</span><svg class="abs" style="left:474.600px;top:2.600px" width="9" height="9" viewBox="0 0 9 9"><circle cx="3.600" cy="3.400" r="2.900" fill="#d8dde6" stroke="#9a8a6a" stroke-width="0.500"/><path d="M1.600 3.400h4" stroke="#6a6a6a" stroke-width="0.600"/><path d="M6 6l1.400 2.400" stroke="#4a9ae0" stroke-width="0.800"/></svg><span class="abs" style="left:485.200px">SELECT LANGUAGE-EN</span><span class="abs" style="left:560.800px">NUM</span><span class="abs" style="left:581.900px;color:#5877ad">BS</span></div></div><div class="insetwrap"><div class="abs" style="left:0.1px;top:0.4px;width:1.4px;height:11.4px;background:#3f6fc4"></div><div class="insetclip"><div class="insetscale"><div class="app"><svg class="cv" width="1024" height="555" viewBox="0 0 1024 555" font-family="'Liberation Sans', sans-serif"><defs><linearGradient id="pgi" x1="0" x2="1" y1="0" y2="0"><stop offset="0" stop-color="#fbfbfb"/><stop offset="0.55" stop-color="#d8d8d8"/><stop offset="1" stop-color="#8a8a8a"/></linearGradient></defs><defs><clipPath id="sci"><path d="M365.4 227.6H508.2V186.3L546.3 175.5V155H698.7V175.5H746.7V474.3H365.4Z"/></clipPath><clipPath id="nsci"><path clip-rule="evenodd" d="M0 0H1024V555H0ZM365.4 227.6H508.2V186.3L546.3 175.5V155H698.7V175.5H746.7V474.3H365.4Z"/></clipPath></defs><rect x="365.4" y="227.6" width="143" height="20" fill="#ffff00"/><polygon points="508.2,186.3 546.3,175.5 746.7,175.5 746.7,247.6 508.2,247.6" fill="#ffff00"/><rect x="365.4" y="247.6" width="381.3" height="62" fill="#808080"/><rect x="365.4" y="309.6" width="381.3" height="62" fill="#9c7c4b"/><rect x="365.4" y="371.6" width="381.3" height="102.7" fill="#ff8000"/><rect x="546.3" y="155" width="152.4" height="20.5" fill="#ff8000" stroke="#3a3020" stroke-width="0.8"/><path d="M365.4 227.6V474.3H746.7V175.5H546.3L508.2 186.3" fill="none" stroke="#333" stroke-width="0.7"/><path d="M365.4 247.6H746.7M508 309.6H746.7M365.4 371.6H746.7" fill="none" stroke="#2a2a2a" stroke-width="0.9"/><path d="M365.4 227.6H508.4M365.4 268.2H508.4M365.4 309.6H508.4" fill="none" stroke="#e8262a" stroke-width="0.8"/><path d="M365.4 236.9H508.4M519.6 198.4H746.7" fill="none" stroke="#555" stroke-width="0.8"/><g clip-path="url(#nsci)"><path d="M219.5 112.9V525.7M243.5 112.9V525.7M267.5 112.9V525.7M291.5 112.9V525.7M314.5 112.9V525.7M338.5 112.9V525.7M362.5 112.9V525.7M386.5 112.9V525.7M410.5 112.9V525.7M434.5 112.9V525.7M458.5 112.9V525.7M481.5 112.9V525.7M505.5 112.9V525.7M529.5 112.9V525.7M553.5 112.9V525.7M577.5 112.9V525.7M601.5 112.9V525.7M624.5 112.9V525.7M648.5 112.9V525.7M672.5 112.9V525.7M696.5 112.9V525.7M720.5 112.9V525.7M744.5 112.9V525.7M768.5 112.9V525.7M791.5 112.9V525.7M815.5 112.9V525.7M839.5 112.9V525.7M863.5 112.9V525.7M887.5 112.9V525.7M219.5 112.5H887.3M219.5 133.5H887.3M219.5 154.5H887.3M219.5 174.5H887.3M219.5 195.5H887.3M219.5 216.5H887.3M219.5 236.5H887.3M219.5 257.5H887.3M219.5 278.5H887.3M219.5 298.5H887.3M219.5 319.5H887.3M219.5 339.5H887.3M219.5 360.5H887.3M219.5 381.5H887.3M219.5 401.5H887.3M219.5 422.5H887.3M219.5 443.5H887.3M219.5 463.5H887.3M219.5 484.5H887.3M219.5 505.5H887.3M219.5 525.5H887.3" fill="none" stroke="#b6b6b6" stroke-width="1" stroke-dasharray="1.6 1.6"/></g><defs><pattern id="mesh" x="365.4" y="198.4" width="9.5" height="9.73" patternUnits="userSpaceOnUse"><path d="M0 0H9.5M0 0V9.73" stroke="#1a2ad8" stroke-width="0.9" fill="none" opacity="0.75"/><path d="M0 9.73L9.5 0M0 0L9.5 9.73" stroke="#1a2ad8" stroke-width="0.6" fill="none" opacity="0.3"/><circle cx="0" cy="0" r="0.7" fill="#e02020"/><circle cx="9.5" cy="0" r="0.7" fill="#e02020"/><circle cx="0" cy="9.73" r="0.7" fill="#e02020"/><circle cx="9.5" cy="9.73" r="0.7" fill="#e02020"/></pattern><pattern id="rdots" x="365.4" y="198.4" width="9.5" height="9.73" patternUnits="userSpaceOnUse"><circle cx="0" cy="0" r="1" fill="#f04040"/><circle cx="9.5" cy="0" r="1" fill="#f04040"/><circle cx="0" cy="9.73" r="1" fill="#f04040"/><circle cx="9.5" cy="9.73" r="1" fill="#f04040"/></pattern><clipPath id="mclip"><path d="M365.4 227.6H508.4V198.4H746.7V474.3H365.4Z"/></clipPath></defs><rect x="364" y="197" width="145" height="30" fill="url(#rdots)"/><g clip-path="url(#mclip)"><rect x="365.4" y="198.4" width="381.3" height="49.2" fill="#202000" opacity="0.1"/><rect x="365.4" y="247.6" width="381.3" height="62.3" fill="#3a5ae0" opacity="0.15"/><rect x="365.4" y="309.6" width="381.3" height="62" fill="#2a3a90" opacity="0.1"/><path d="M365.4 227.6H508.4V198.4H746.7V474.3H365.4Z" fill="url(#mesh)"/><path d="M522.3 198.4L522.3 215.5L522.1 239.4L521.8 262.7L521.2 284.4L520.3 304.1L519.3 321.1L518.1 334.9L516.8 345.1L515.4 351.3L514 353.4L512.7 351.7L511.5 346.6L510.4 338.3L509.3 327L508.4 313L507.7 296.9L507.2 279L506.8 259.9L506.7 240.3V227.6M524.9 198.4L524.9 215.9L524.8 240.1L524.3 263.5L523.5 285.4L522.4 305.2L521 322.4L519.5 336.2L517.7 346.5L515.9 352.7L514 354.8L512.4 353.1L510.9 348L509.5 339.5L508.2 328.1L507.1 314L506.2 297.7L505.6 279.7L505.2 260.4L505 240.6V227.6M527.6 198.4L527.6 216.4L527.4 240.7L526.8 264.3L525.8 286.4L524.4 306.3L522.8 323.6L520.8 337.5L518.7 347.8L516.4 354.1L514 356.3L512.2 354.5L510.4 349.3L508.7 340.8L507.2 329.3L505.8 315.1L504.8 298.6L504 280.4L503.5 260.9L503.4 240.9V227.6M530.3 198.4L530.3 216.9L530 241.4L529.3 265.1L528.1 287.3L526.5 307.4L524.5 324.8L522.1 338.8L519.6 349.2L516.8 355.6L514 357.7L511.9 355.9L509.8 350.7L507.8 342.1L506.1 330.4L504.6 316.1L503.3 299.5L502.4 281L501.9 261.4L501.7 241.2V227.6M533 198.4L533 217.4L532.7 242L531.8 265.9L530.4 288.3L528.5 308.5L526.2 326L523.5 340.1L520.5 350.6L517.3 357L514 359.1L511.6 357.3L509.2 352L507 343.4L505 331.6L503.3 317.1L501.9 300.3L500.8 281.7L500.2 261.9L500 241.5V227.6M535.6 198.4L535.6 217.8L535.3 242.7L534.3 266.7L532.7 289.3L530.6 309.6L527.9 327.2L524.8 341.4L521.4 351.9L517.8 358.4L514 360.5L511.3 358.7L508.6 353.4L506.1 344.7L503.9 332.8L502 318.2L500.4 301.2L499.3 282.5L498.5 262.4L498.3 241.8V227.6M538.3 198.4L538.3 218.3L537.9 243.4L536.8 267.6L535 290.3L532.6 310.7L529.6 328.4L526.2 342.8L522.3 353.3L518.2 359.8L514 362L511 360.1L508 354.8L505.3 345.9L502.8 334L500.7 319.2L498.9 302.1L497.7 283.2L496.9 263L496.6 242.1V227.6M541 198.4L541 218.8L540.6 244L539.3 268.4L537.4 291.3L534.7 311.9L531.4 329.7L527.5 344.1L523.3 354.7L518.7 361.2L514 363.4L510.7 361.6L507.5 356.1L504.4 347.2L501.7 335.2L499.4 320.3L497.5 303L496.1 283.9L495.2 263.5L494.9 242.4V227.6M543.6 198.4L543.6 219.2L543.2 244.8L541.9 269.3L539.7 292.3L536.7 313L533.1 330.9L528.9 345.4L524.2 356.1L519.2 362.6L514 364.8L510.4 363L506.9 357.5L503.6 348.5L500.6 336.4L498.1 321.4L496 304L494.5 284.7L493.6 264.1L493.3 242.6V227.6M546.3 198.4L546.3 219.7L545.8 245.5L544.4 270.2L542 293.3L538.8 314.2L534.8 332.2L530.2 346.7L525.1 357.5L519.7 364L514 366.2L510.1 364.4L506.3 358.9L502.7 349.8L499.5 337.6L496.8 322.4L494.6 304.9L492.9 285.4L491.9 264.6L491.6 242.9V227.6M549 198.4L549 220.2L548.5 246.2L546.9 271.1L544.3 294.4L540.9 315.4L536.6 333.4L531.6 348.1L526.1 358.8L520.2 365.4L514 367.7L509.7 365.8L505.7 360.2L501.9 351.1L498.4 338.8L495.5 323.6L493.1 305.9L491.3 286.2L490.3 265.2L489.9 243.2V227.6M551.6 198.4L551.6 220.6L551.1 247L549.4 272.1L546.7 295.5L542.9 316.6L538.3 334.7L533 349.4L527 360.2L520.7 366.9L514 369.1L509.4 367.2L505.1 361.6L501 352.5L497.3 340L494.2 324.7L491.6 306.9L489.7 287.1L488.6 265.8L488.2 243.5V227.6M554.3 198.4L554.3 221.1L553.7 247.8L551.9 273.1L549 296.6L545 317.8L540.1 336L534.4 350.8L528 361.6L521.2 368.3L514 370.5L509.1 368.6L504.4 363L500.1 353.8L496.2 341.3L492.9 325.8L490.2 307.9L488.2 287.9L486.9 266.4L486.5 243.8V227.6M557 198.4L557 221.6L556.3 248.6L554.4 274.1L551.3 297.8L547.1 319.1L541.9 337.4L535.8 352.2L529 363L521.7 369.7L514 371.9L508.8 370L503.8 364.4L499.2 355.1L495.1 342.5L491.5 327L488.7 308.9L486.6 288.8L485.3 267.1L484.8 244.1V227.6M559.7 198.4L559.7 222.1L559 249.5L557 275.2L553.7 299L549.2 320.4L543.7 338.7L537.2 353.5L530 364.4L522.3 371.1L514 373.4L508.4 371.4L503.2 365.8L498.3 356.5L494 343.8L490.2 328.2L487.2 310L485 289.7L483.6 267.8L483.2 244.4V227.6M562.3 198.4L562.3 222.5L561.6 250.4L559.5 276.3L556 300.2L551.3 321.7L545.5 340.1L538.7 354.9L531.1 365.9L522.8 372.5L514 374.8L508.1 372.9L502.5 367.2L497.4 357.8L492.8 345.1L488.9 329.4L485.7 311.1L483.4 290.6L482 268.5L481.5 244.7V227.6M565 198.4L565 223L564.3 251.3L562 277.4L558.4 301.5L553.4 323L547.3 341.4L540.1 356.3L532.1 367.3L523.4 374L514 376.2L507.7 374.3L501.9 368.6L496.5 359.2L491.7 346.4L487.6 330.6L484.2 312.2L481.8 291.6L480.3 269.2L479.8 245V227.6M567.7 198.4L567.7 223.5L566.9 252.2L564.6 278.6L560.8 302.8L555.6 324.4L549.1 342.9L541.6 357.8L533.2 368.7L524 375.4L514 377.6L507.3 375.7L501.2 370L495.5 360.6L490.5 347.8L486.2 331.9L482.7 313.4L480.2 292.6L478.6 270L478.1 245.3V227.6M570.3 198.4L570.3 223.9L569.5 253.2L567.1 279.8L563.1 304.1L557.7 325.8L551 344.3L543.1 359.2L534.3 370.1L524.6 376.8L514 379L506.9 377.1L500.5 371.4L494.6 362L489.3 349.1L484.9 333.2L481.2 314.6L478.6 293.6L477 270.8L476.4 245.6V227.6M573 198.4L573 224.4L572.2 254.3L569.6 281.1L565.5 305.5L559.9 327.2L552.9 345.7L544.7 360.6L535.4 371.6L525.3 378.2L514 380.5L506.5 378.5L499.8 372.8L493.6 363.4L488.1 350.5L483.5 334.5L479.7 315.8L477 294.7L475.3 271.6L474.8 245.9V227.6M575.7 198.4L575.7 224.9L574.8 255.4L572.2 282.4L567.9 306.9L562.1 328.7L554.8 347.2L546.2 362.1L536.6 373L526 379.7L514 381.9L506.1 380L499 374.2L492.6 364.8L486.9 351.9L482.1 335.9L478.2 317.1L475.4 295.9L473.7 272.5L473.1 246.2V227.6M578.4 198.4L578.4 225.4L577.4 256.5L574.7 283.7L570.3 308.4L564.3 330.2L556.7 348.7L547.8 363.6L537.8 374.5L526.7 381.1L514 383.3L505.6 381.4L498.2 375.6L491.6 366.2L485.7 353.3L480.7 337.3L476.7 318.4L473.8 297.1L472 273.4L471.4 246.5V227.6M581 198.4L581 225.8L580.1 257.7L577.3 285.2L572.7 309.9L566.5 331.7L558.7 350.2L549.5 365.1L539 375.9L527.4 382.5L514 384.7L505.1 382.8L497.5 377.1L490.6 367.7L484.5 354.8L479.3 338.7L475.2 319.8L472.2 298.3L470.3 274.4L469.7 246.8V227.6M583.7 198.4L583.7 226.3L582.7 258.9L579.9 286.6L575.2 311.5L568.7 333.3L560.7 351.8L551.1 366.6L540.3 377.4L528.2 384L514 386.2L504.6 384.2L496.6 378.5L489.5 369.1L483.2 356.3L477.9 340.2L473.7 321.2L470.5 299.6L468.7 275.4L468 247.1V227.6M586.4 198.4L586.4 226.8L585.4 260.2L582.4 288.2L577.6 313.1L571 334.9L562.7 353.4L552.9 368.1L541.6 378.9L529 385.4L514 387.6L504.1 385.7L495.8 380L488.4 370.6L481.9 357.8L476.5 341.7L472.1 322.6L468.9 300.9L467 276.5L466.3 247.4V227.6M589 198.4L589 227.2L588 261.5L585 289.8L580.1 314.8L573.3 336.6L564.7 355L554.6 369.7L543 380.3L529.9 386.8L514 389L503.5 387.1L494.9 381.4L487.3 372.1L480.6 359.3L475 343.2L470.6 324.1L467.3 302.3L465.3 277.6L464.7 247.6V227.6M591.7 198.4L591.7 227.7L590.7 262.9L587.6 291.4L582.5 316.5L575.6 338.3L566.8 356.6L556.4 371.2L544.4 381.8L530.8 388.3L514 390.4L503 388.5L494 382.9L486.2 373.6L479.3 360.8L473.6 344.8L469 325.7L465.7 303.7L463.7 278.8L463 247.9V227.6M594.4 198.4L594.4 228.2L593.3 264.4L590.2 293.1L585 318.3L577.9 340L568.9 358.3L558.2 372.8L545.9 383.3L531.8 389.7L514 391.9L502.3 390L493.1 384.4L485 375.1L478 362.4L472.1 346.4L467.4 327.3L464 305.2L462 280L461.3 248.2V227.6M597 198.4L597 228.6L596 265.9L592.8 294.9L587.5 320.1L580.2 341.8L571.1 360L560.1 374.4L547.4 384.8L532.8 391.2L514 393.3L501.7 391.4L492.1 385.8L483.8 376.7L476.6 364L470.6 348L465.9 328.9L462.4 306.8L460.3 281.3L459.6 248.5V227.6M599.7 198.4L599.7 229.1L598.6 267.5L595.4 296.7L590 322L582.6 343.6L573.3 361.7L562.1 376L549 386.3L533.9 392.6L514 394.7L501 392.9L491.1 387.3L482.6 378.2L475.2 365.6L469.1 349.7L464.3 330.6L460.8 308.4L458.6 282.6L457.9 248.8V227.6M602.4 198.4L602.4 229.6L601.3 269.2L598 298.6L592.5 323.9L585 345.5L575.5 363.4L564 377.6L550.6 387.8L535 394L514 396.1L500.3 394.3L490.1 388.8L481.3 379.8L473.8 367.2L467.6 351.4L462.7 332.3L459.1 310.1L457 284.1L456.2 249.1V227.6M605.1 198.4L605.1 230.1L603.9 270.9L600.6 300.6L595.1 325.8L587.4 347.3L577.8 365.2L566.1 379.2L552.3 389.4L536.2 395.5L514 397.6L499.5 395.7L489 390.3L480 381.3L472.4 368.9L466.1 353.1L461.1 334.1L457.5 311.8L455.3 285.5L454.6 249.4V227.6M607.7 198.4L607.7 230.5L606.6 272.7L603.2 302.6L597.6 327.8L589.9 349.3L580.1 366.9L568.1 380.8L554.1 390.9L537.4 396.9L514 399L498.7 397.2L487.9 391.8L478.7 382.9L470.9 370.6L464.5 354.9L459.5 335.9L455.8 313.6L453.6 287L452.9 249.7V227.6M610.4 198.4L610.4 231L609.3 274.5L605.9 304.6L600.2 329.9L592.4 351.2L582.4 368.7L570.3 382.5L555.9 392.4L538.8 398.4L514 400.4L497.9 398.6L486.7 393.3L477.3 384.5L469.4 372.3L462.9 356.7L457.8 337.8L454.2 315.4L451.9 288.6L451.2 250V227.6M613.1 198.4L613.1 231.5L611.9 276.4L608.5 306.8L602.8 332L594.9 353.2L584.8 370.6L572.5 384.2L557.8 393.9L540.1 399.9L514 401.8L497 400.1L485.5 394.8L475.9 386.1L467.9 374L461.4 358.5L456.2 339.7L452.5 317.3L450.3 290.3L449.5 250.3V227.6M615.7 198.4L615.7 231.9L614.6 278.4L611.1 308.9L605.4 334.1L597.4 355.2L587.2 372.4L574.7 385.8L559.7 395.5L541.6 401.3L514 403.2L496.1 401.5L484.3 396.3L474.5 387.7L466.4 375.7L459.8 360.4L454.6 341.7L450.8 319.2L448.6 292L447.8 250.6V227.6M618.4 198.4L618.4 232.4L617.3 280.5L613.8 311.2L608 336.3L600 357.2L589.6 374.2L577 387.5L561.7 397L543.1 402.8L514 404.7L495.1 403L483 397.8L473.1 389.4L464.8 377.5L458.1 362.3L452.9 343.6L449.2 321.2L446.9 293.8L446.2 250.9V227.6M621.1 198.4L621.1 232.9L619.9 282.6L616.4 313.5L610.6 338.5L602.5 359.3L592.1 376.1L579.3 389.2L563.8 398.6L544.7 404.2L514 406.1L494.1 404.4L481.7 399.4L471.6 391L463.3 379.3L456.5 364.2L451.3 345.7L447.5 323.2L445.2 295.6L444.5 251.2V227.6M623.8 198.4L623.8 233.4L622.6 284.8L619.1 315.8L613.3 340.8L605.1 361.3L594.7 378L581.7 390.9L566 400.1L546.4 405.7L514 407.5L493 405.9L480.3 400.9L470.1 392.6L461.7 381.1L454.9 366.1L449.6 347.7L445.8 325.3L443.5 297.5L442.8 251.5V227.6M626.4 198.4L626.4 233.8L625.3 287L621.8 318.2L615.9 343.1L607.8 363.4L597.2 379.9L584.1 392.6L568.2 401.7L548.1 407.1L514 408.9L491.9 407.3L478.9 402.4L468.5 394.3L460 382.9L453.2 368.1L447.9 349.8L444.1 327.5L441.9 299.5L441.1 251.8V227.6M629.1 198.4L629.1 234.3L627.9 289.3L624.4 320.6L618.6 345.4L610.4 365.6L599.8 381.8L586.6 394.3L570.4 403.2L550 408.6L514 410.4L490.7 408.8L477.4 404L466.9 395.9L458.4 384.7L451.5 370.1L446.2 351.9L442.4 329.7L440.2 301.5L439.4 252.1V227.6M631.8 198.4L631.8 234.8L630.6 291.7L627.1 323.1L621.3 347.7L613.1 367.7L602.4 383.7L589.1 396L572.8 404.8L551.9 410L514 411.8L489.5 410.2L476 405.5L465.3 397.6L456.7 386.5L449.8 372.1L444.5 354.1L440.8 331.9L438.5 303.6L437.7 252.4V227.6M634.4 198.4L634.4 235.2L633.3 294.1L629.8 325.6L624 350.1L615.8 369.8L605.1 385.6L591.7 397.7L575.1 406.4L553.8 411.5L514 413.2L488.2 411.7L474.4 407L463.7 399.3L455 388.3L448.1 374.1L442.8 356.3L439.1 334.2L436.8 305.8L436.1 252.6V227.6M637.1 198.4L637.1 235.7L636 296.6L632.5 328.1L626.7 352.5L618.5 372L607.8 387.6L594.3 399.5L577.6 407.9L555.9 413L514 414.6L486.9 413.1L472.9 408.6L462 400.9L453.3 390.2L446.4 376.1L441.1 358.5L437.4 336.5L435.1 308L434.4 252.9V227.6M639.8 198.4L639.8 236.2L638.6 299.1L635.2 330.7L629.4 354.9L621.2 374.2L610.5 389.5L597 401.2L580.1 409.5L558 414.4L514 416.1L485.5 414.6L471.3 410.1L460.3 402.6L451.6 392L444.7 378.2L439.4 360.7L435.7 338.8L433.4 310.2L432.7 253.2V227.6M642.4 198.4L642.4 236.6L641.3 301.7L637.9 333.3L632.1 357.3L623.9 376.4L613.2 391.4L599.7 402.9L582.7 411L560.2 415.9L514 417.5L484.1 416L469.6 411.6L458.6 404.3L449.9 393.9L443 380.2L437.7 362.9L434 341.2L431.8 312.5L431 253.5V227.6M645.1 198.4L645.1 237.1L644 304.4L640.6 336L634.8 359.7L626.7 378.6L616 393.4L602.4 404.6L585.3 412.6L562.5 417.3L514 418.9L482.7 417.5L468 413.2L456.9 406L448.1 395.7L441.2 382.3L436 365.2L432.3 343.6L430.1 314.9L429.3 253.8V227.6M647.8 198.4L647.8 237.6L646.7 307.1L643.3 338.6L637.6 362.2L629.5 380.7L618.8 395.3L605.2 406.4L588 414.2L564.9 418.8L514 420.3L481.2 418.9L466.3 414.7L455.1 407.6L446.4 397.6L439.5 384.3L434.2 367.5L430.6 346L428.4 317.3L427.6 254.1V227.6M650.5 198.4L650.5 238.1L649.3 309.8L646 341.3L640.3 364.7L632.3 382.9L621.6 397.3L608 408.1L590.7 415.7L567.3 420.2L514 421.8L479.6 420.4L464.5 416.3L453.3 409.3L444.6 399.4L437.7 386.4L432.5 369.7L428.9 348.5L426.7 319.8L426 254.4V227.6M653.1 198.4L653.1 238.5L652 312.6L648.7 344L643.1 367.1L635.1 385.1L624.5 399.2L610.9 409.8L593.5 417.3L569.8 421.7L514 423.2L478 421.8L462.8 417.8L451.5 411L442.8 401.3L435.9 388.5L430.8 372L427.1 350.9L425 322.3L424.3 254.7V227.6M655.8 198.4L655.8 239L654.7 315.4L651.4 346.7L645.8 369.6L637.9 387.3L627.3 401.1L613.8 411.5L596.3 418.8L572.4 423.2L514 424.6L476.4 423.3L461 419.3L449.7 412.7L441 403.2L434.2 390.5L429 374.3L425.4 353.4L423.3 324.8L422.6 255V227.6M658.5 198.4L658.5 239.5L657.4 318.2L654.1 349.4L648.6 372.1L640.7 389.5L630.2 403.1L616.7 413.3L599.2 420.4L575 424.6L514 426L474.7 424.7L459.1 420.9L447.8 414.3L439.1 405L432.4 392.6L427.3 376.6L423.7 355.9L421.6 327.4L420.9 255.3V227.6M661.1 198.4L661.1 239.9L660.1 321.1L656.8 352.2L651.4 374.5L643.5 391.7L633.1 405L619.6 415L602.1 422L577.7 426.1L514 427.4L473 426.2L457.3 422.4L446 416L437.3 406.9L430.6 394.7L425.5 379L422 358.5L419.9 330L419.2 255.6V227.6M663.8 198.4L663.8 240.4L662.8 324L659.5 354.9L654.1 377L646.4 393.9L636 406.9L622.6 416.7L605 423.5L580.5 427.5L514 428.9L471.2 427.6L455.4 423.9L444.1 417.7L435.4 408.7L428.8 396.8L423.8 381.3L420.3 361L418.2 332.6L417.6 255.9V227.6M666.5 198.4L666.5 240.9L665.4 326.9L662.3 357.7L656.9 379.5L649.2 396.1L638.9 408.9L625.6 418.4L608 425.1L583.3 429L514 430.3L469.4 429.1L453.5 425.5L442.2 419.4L433.6 410.6L427 398.9L422 383.6L418.6 363.5L416.5 335.3L415.9 256.2V227.6M669.2 198.4L669.2 241.4L668.1 329.9L665 360.4L659.7 381.9L652.1 398.3L641.9 410.8L628.6 420.1L611.1 426.6L586.2 430.4L514 431.7L467.6 430.5L451.6 427L440.3 421L431.7 412.4L425.2 400.9L420.3 385.9L416.9 366.1L414.9 338L414.2 256.5V227.6M671.8 198.4L671.8 241.8L670.8 332.9L667.7 363.2L662.5 384.4L654.9 400.4L644.8 412.7L631.6 421.8L614.1 428.2L589.1 431.9L514 433.1L465.7 432L449.6 428.5L438.4 422.7L429.9 414.3L423.4 403L418.5 388.2L415.1 368.6L413.2 340.7L412.5 256.8V227.6M674.5 198.4L674.5 242.3L673.5 335.8L670.4 365.9L665.3 386.8L657.8 402.6L647.8 414.6L634.7 423.5L617.2 429.7L592.1 433.4L514 434.6L463.8 433.4L447.7 430.1L436.4 424.4L428 416.1L421.5 405L416.8 390.5L413.4 371.2L411.5 343.4L410.8 257.1V227.6M677.2 198.4L677.2 242.8L676.2 338.8L673.2 368.7L668.1 389.3L660.7 404.7L650.8 416.5L637.7 425.2L620.3 431.2L595.1 434.8L514 436L461.9 434.9L445.7 431.6L434.5 426L426.1 418L419.7 407.1L415 392.8L411.7 373.8L409.8 346.2L409.1 257.4V227.6M679.8 198.4L679.8 243.2L678.9 341.8L675.9 371.4L670.9 391.7L663.6 406.9L653.8 418.4L640.8 426.9L623.5 432.8L598.2 436.3L514 437.4L459.9 436.3L443.7 433.1L432.5 427.7L424.2 419.8L417.9 409.1L413.2 395.1L410 376.3L408.1 348.9L407.5 257.6V227.6M682.5 198.4L682.5 243.7L681.5 344.8L678.6 374.1L673.6 394.1L666.5 409L656.7 420.3L643.9 428.6L626.6 434.3L601.3 437.7L514 438.8L457.9 437.8L441.7 434.7L430.6 429.3L422.3 421.6L416.1 411.2L411.5 397.4L408.3 378.9L406.4 351.7L405.8 257.9V227.6M685.2 198.4L685.2 244.2L684.2 347.8L681.3 376.8L676.4 396.5L669.3 411.1L659.7 422.1L647 430.3L629.8 435.9L604.5 439.2L514 440.3L455.9 439.2L439.6 436.2L428.6 431L420.4 423.4L414.3 413.2L409.7 399.7L406.6 381.4L404.7 354.5L404.1 258.2V227.6M687.8 198.4L687.8 244.6L686.9 350.8L684.1 379.6L679.2 398.9L672.2 413.2L662.7 424L650.1 431.9L633 437.4L607.7 440.6L514 441.7L453.9 440.7L437.6 437.7L426.6 432.6L418.5 425.2L412.4 415.2L407.9 401.9L404.8 383.9L403 357.2L402.4 258.5V227.6M690.5 198.4L690.5 245.1L689.6 353.8L686.8 382.2L682 401.3L675.1 415.3L665.7 425.8L653.2 433.6L636.3 438.9L610.9 442.1L514 443.1L451.8 442.1L435.6 439.2L424.7 434.3L416.6 427L410.6 417.2L406.2 404.2L403.1 386.5L401.3 360L400.7 258.8V227.6M693.2 198.4L693.2 245.6L692.3 356.8L689.5 384.9L684.8 403.6L678 417.4L668.7 427.7L656.4 435.3L639.5 440.5L614.2 443.5L514 444.5L449.7 443.6L433.5 440.7L422.7 435.9L414.7 428.8L408.8 419.2L404.4 406.4L401.4 389L399.6 362.8L399 259.1V227.6M695.9 198.4L695.9 246.1L695 359.8L692.3 387.6L687.6 406L680.9 419.4L671.7 429.5L659.5 436.9L642.8 442L617.5 445L514 446L447.6 445L431.4 442.3L420.7 437.5L412.8 430.6L407 421.2L402.6 408.6L399.7 391.5L397.9 365.6L397.4 259.4V227.6M698.5 198.4L698.5 246.5L697.6 362.8L695 390.2L690.4 408.3L683.8 421.5L674.8 431.3L662.6 438.6L646 443.5L620.8 446.4L514 447.4L445.5 446.5L429.4 443.8L418.7 439.1L410.9 432.4L405.1 423.2L400.9 410.9L398 394L396.2 368.4L395.7 259.7V227.6M701.2 198.4L701.2 247L700.3 365.8L697.7 392.8L693.2 410.6L686.7 423.5L677.8 433.2L665.8 440.2L649.3 445L624.2 447.9L514 448.8L443.4 447.9L427.3 445.3L416.7 440.8L409 434.2L403.3 425.2L399.1 413.1L396.2 396.5L394.6 371.1L394 260V227.6M703.9 198.4L703.9 247.5L703 368.8L700.4 395.5L696 412.9L689.6 425.6L680.8 435L668.9 441.8L652.6 446.6L627.6 449.3L514 450.2L441.2 449.4L425.2 446.8L414.7 442.4L407.1 435.9L401.5 427.1L397.3 415.3L394.5 398.9L392.9 373.9L392.3 260.3V227.6M706.5 198.4L706.5 247.9L705.7 371.7L703.2 398L698.8 415.2L692.5 427.6L683.8 436.8L672.1 443.5L655.9 448.1L631 450.8L514 451.6L439 450.8L423.1 448.3L412.7 444L405.2 437.7L399.6 429.1L395.6 417.4L392.8 401.4L391.2 376.7L390.6 260.6V227.6M709.2 198.4L709.2 248.4L708.4 374.6L705.9 400.6L701.6 417.4L695.4 429.6L686.8 438.6L675.2 445.1L659.2 449.6L634.4 452.2L514 453.1L436.9 452.3L421 449.8L410.7 445.6L403.3 439.4L397.8 431L393.8 419.6L391.1 403.8L389.5 379.4L389 260.9V227.6M711.9 198.4L711.9 248.9L711.1 377.6L708.6 403.2L704.4 419.7L698.3 431.5L689.8 440.3L678.4 446.7L662.5 451.1L637.8 453.7L514 454.5L434.7 453.7L418.9 451.3L408.7 447.2L401.4 441.2L396 432.9L392.1 421.7L389.4 406.2L387.8 382.2L387.3 261.2V227.6M714.6 198.4L714.6 249.4L713.8 380.5L711.3 405.7L707.2 421.9L701.1 433.5L692.8 442.1L681.5 448.3L665.8 452.6L641.3 455.1L514 455.9L432.5 455.1L416.8 452.8L406.7 448.8L399.5 442.9L394.2 434.8L390.3 423.9L387.6 408.6L386.1 384.9L385.6 261.5V227.6M717.2 198.4L717.2 249.8L716.4 383.3L714.1 408.2L710 424.1L704 435.5L695.8 443.9L684.7 450L669.1 454.1L644.7 456.5L514 457.3L430.3 456.6L414.7 454.3L404.8 450.4L397.6 444.6L392.4 436.7L388.5 426L385.9 411L384.4 387.6L383.9 261.8V227.6M719.9 198.4L719.9 250.3L719.1 386.2L716.8 410.7L712.8 426.3L706.9 437.4L698.8 445.6L687.8 451.6L672.4 455.6L648.2 458L514 458.8L428.1 458L412.6 455.8L402.8 452L395.7 446.4L390.5 438.6L386.8 428.1L384.2 413.4L382.7 390.3L382.2 262.1V227.6M722.6 198.4L722.6 250.8L721.8 389L719.5 413.1L715.6 428.4L709.8 439.3L701.8 447.4L690.9 453.2L675.7 457.1L651.7 459.4L514 460.2L425.9 459.5L410.5 457.3L400.8 453.6L393.8 448.1L388.7 440.5L385 430.2L382.5 415.7L381 393L380.5 262.4V227.6M725.2 198.4L725.2 251.2L724.5 391.8L722.2 415.6L718.4 430.6L712.7 441.3L704.8 449.1L694.1 454.8L679 458.6L655.2 460.9L514 461.6L423.7 460.9L408.4 458.8L398.8 455.1L391.9 449.8L386.9 442.4L383.3 432.3L380.8 418.1L379.3 395.6L378.9 262.6V227.6M727.9 198.4L727.9 251.7L727.2 394.6L725 418L721.1 432.7L715.5 443.2L707.8 450.8L697.2 456.4L682.3 460.1L658.7 462.3L514.1 463L421.5 462.4L406.3 460.3L396.8 456.7L390 451.5L385.1 444.2L381.5 434.3L379.1 420.4L377.6 398.3L377.2 262.9V227.6M730.6 198.4L730.6 252.2L729.9 397.4L727.7 420.4L723.9 434.8L718.4 445.1L710.8 452.5L700.4 457.9L685.6 461.6L662.2 463.8L514.1 464.5L419.2 463.8L404.2 461.8L394.8 458.3L388.1 453.2L383.3 446.1L379.7 436.4L377.3 422.7L376 400.9L375.5 263.2V227.6M733.2 198.4L733.2 252.6L732.5 400.2L730.4 422.8L726.7 436.9L721.3 446.9L713.8 454.3L703.5 459.5L688.9 463.1L665.7 465.2L514.1 465.9L417 465.2L402.1 463.3L392.8 459.8L386.3 454.8L381.5 447.9L378 438.4L375.6 425L374.3 403.5L373.8 263.5V227.6M735.9 198.4L735.9 253.1L735.2 402.9L733.1 425.1L729.5 439L724.2 448.8L716.8 456L706.6 461.1L692.2 464.6L669.2 466.6L514.1 467.3L414.8 466.7L400.1 464.7L390.9 461.4L384.4 456.5L379.6 449.7L376.2 440.4L373.9 427.2L372.6 406.1L372.1 263.8V227.6M738.6 198.4L738.6 253.6L737.9 405.6L735.8 427.5L732.3 441.1L727 450.7L719.7 457.6L709.7 462.7L695.5 466.1L672.7 468.1L514.1 468.7L412.6 468.1L398 466.2L388.9 463L382.5 458.2L377.8 451.6L374.5 442.4L372.2 429.5L370.9 408.7L370.4 264.1V227.6M741.3 198.4L741.3 254.1L740.6 408.3L738.6 429.8L735 443.1L729.9 452.5L722.7 459.3L712.8 464.2L698.8 467.6L676.2 469.5L514.2 470.2L410.4 469.5L395.9 467.7L386.9 464.5L380.6 459.9L376 453.4L372.7 444.4L370.5 431.7L369.2 411.2L368.8 264.4V227.6M743.9 198.4L743.9 254.5L743.3 410.9L741.3 432.1L737.8 445.2L732.7 454.3L725.7 461L716 465.8L702.1 469.1L679.7 471L514.2 471.6L408.1 471L393.8 469.2L385 466.1L378.7 461.5L374.2 455.2L371 446.4L368.8 433.9L367.5 413.8L367.1 264.7V227.6" fill="none" stroke="#000" stroke-width="0.7" opacity="0.42"/></g><rect x="507" y="186.4" width="12.6" height="16" fill="#808080" stroke="#6a6a6a" stroke-width="0.5"/><rect x="508.8" y="202.4" width="9" height="148.2" fill="url(#pgi)"/><path d="M508.8 210H518M508.8 218.6H518M508.8 226.7H518M508.8 235.3H518M508.8 244H518M508.8 252.2H518M508.8 260.6H518M508.8 268.8H518M508.8 277.1H518M508.8 285.3H518M508.8 293.5H518M508.8 301.6H518M508.8 309.7H518M508.8 313.2H518M508.8 316.82H518M508.8 320.44H518M508.8 324.06H518M508.8 327.68H518M508.8 331.3H518M508.8 334.92H518M508.8 338.54H518M508.8 342.16H518M508.8 345.78H518" stroke="#43d84f" stroke-width="0.9" fill="none"/><text x="509.2" y="209" font-size="4.6" fill="#222" font-style="italic">1</text><text x="509.2" y="217.6" font-size="4.6" fill="#222" font-style="italic">2</text><text x="509.2" y="225.7" font-size="4.6" fill="#222" font-style="italic">3</text><text x="509.2" y="234.3" font-size="4.6" fill="#222" font-style="italic">4</text><text x="509.2" y="243" font-size="4.6" fill="#222" font-style="italic">5</text><text x="509.2" y="251.2" font-size="4.6" fill="#222" font-style="italic">6</text><text x="509.2" y="259.6" font-size="4.6" fill="#222" font-style="italic">7</text><text x="509.2" y="267.8" font-size="4.6" fill="#222" font-style="italic">8</text><text x="509.2" y="276.1" font-size="4.6" fill="#222" font-style="italic">9</text><text x="509.2" y="284.3" font-size="4.6" fill="#222" font-style="italic">10</text><text x="509.2" y="292.5" font-size="4.6" fill="#222" font-style="italic">11</text><text x="509.2" y="300.6" font-size="4.6" fill="#222" font-style="italic">12</text><text x="509.2" y="308.7" font-size="4.6" fill="#222" font-style="italic">13</text><text x="509.2" y="312.2" font-size="4.6" fill="#222" font-style="italic">14</text><text x="509.2" y="315.82" font-size="4.6" fill="#222" font-style="italic">15</text><text x="509.2" y="319.44" font-size="4.6" fill="#222" font-style="italic">16</text><text x="509.2" y="323.06" font-size="4.6" fill="#222" font-style="italic">17</text><text x="509.2" y="326.68" font-size="4.6" fill="#222" font-style="italic">18</text><text x="509.2" y="330.3" font-size="4.6" fill="#222" font-style="italic">19</text><text x="509.2" y="333.92" font-size="4.6" fill="#222" font-style="italic">20</text><text x="509.2" y="337.54" font-size="4.6" fill="#222" font-style="italic">21</text><text x="509.2" y="341.16" font-size="4.6" fill="#222" font-style="italic">22</text><text x="509.2" y="344.78" font-size="4.6" fill="#222" font-style="italic">23</text><text x="509.2" y="356.6" font-size="4.6" fill="#222" font-style="italic">27</text><path d="M508.6 227.6H518V350.6H508.6Z" fill="none" stroke="#111" stroke-width="0.9"/><path d="M519.6 198.5H508.5V237" fill="none" stroke="#2a2af0" stroke-width="0.8"/><rect x="508.6" y="203" width="9.4" height="147" fill="#1a2a50" opacity="0.35"/><ellipse cx="511" cy="352" rx="7" ry="4" fill="#111" opacity="0.7"/><path d="M508.2 186.3V146M508.2 186.3H553" stroke="#ff2020" stroke-width="0.7" fill="none"/><path d="M508.2 144.4l-1.5 3.2h3zM555.6 186.3l-3.2-1.5v3z" fill="#ff2020"/><text x="511" y="150.5" font-size="5" fill="#333">z</text><text x="553.5" y="192" font-size="5" fill="#c33">x</text><rect x="364.3" y="226.5" width="2.2" height="2.2" fill="#2020c0" stroke="#e01060" stroke-width="0.5"/><rect x="364.3" y="246.5" width="2.2" height="2.2" fill="#2020c0" stroke="#e01060" stroke-width="0.5"/><rect x="364.3" y="308.5" width="2.2" height="2.2" fill="#2020c0" stroke="#e01060" stroke-width="0.5"/><rect x="364.3" y="473.2" width="2.2" height="2.2" fill="#2020c0" stroke="#e01060" stroke-width="0.5"/><rect x="507.3" y="226.5" width="2.2" height="2.2" fill="#2020c0" stroke="#e01060" stroke-width="0.5"/><rect x="507.1" y="185.2" width="2.2" height="2.2" fill="#2020c0" stroke="#e01060" stroke-width="0.5"/><rect x="545.2" y="174.4" width="2.2" height="2.2" fill="#2020c0" stroke="#e01060" stroke-width="0.5"/><rect x="697.6" y="174.4" width="2.2" height="2.2" fill="#2020c0" stroke="#e01060" stroke-width="0.5"/><rect x="745.6" y="174.4" width="2.2" height="2.2" fill="#2020c0" stroke="#e01060" stroke-width="0.5"/><rect x="745.6" y="246.5" width="2.2" height="2.2" fill="#2020c0" stroke="#e01060" stroke-width="0.5"/><path d="M361.2 233.2h8.6l-4.3 3.7z" fill="#1515d8"/><path d="M365.5 228.5v4.5" stroke="#1515d8" stroke-width="0.6"/><path d="M623.4 194.3h8.6l-4.3 4.1z" fill="#1515d8"/><path d="M472.3 186V351M710.8 186V303" stroke="#1d8f99" stroke-width="0.7" fill="none"/><path d="M470.8 186h3M472.3 184.4v3M709.3 186h3M710.8 184.4v3" stroke="#1d8f99" stroke-width="0.5" fill="none"/><path d="M472.3 353.4l-1.6-2.6h3.2z" fill="#3aa0d0"/><text transform="translate(470.6 274) rotate(-90)" font-size="5.6" fill="#1d8f99">8.00</text><text transform="translate(708.6 222) rotate(-90)" font-size="5.6" fill="#2a9a50">3.00</text><text transform="translate(443.6 227) rotate(-90)" font-size="5.6" fill="#222">(2.0)</text><text transform="translate(443.6 268) rotate(-90)" font-size="5.6" fill="#222">(4.0)</text><text transform="translate(443.6 309) rotate(-90)" font-size="5.6" fill="#222">(6.0)</text><text x="212.7" y="168.2" font-size="10.8" textLength="98.6" lengthAdjust="spacingAndGlyphs" fill="#111" stroke="#111" stroke-width="0.15">DESIGN SHEET PILES</text><text x="804" y="165.9" font-size="10.6" textLength="52.4" lengthAdjust="spacingAndGlyphs" fill="#111">WATER TABLE</text><text x="375.6" y="224.8" font-size="7.6" textLength="20.6" lengthAdjust="spacingAndGlyphs" fill="#111">ROAD</text><text x="547" y="160" font-size="3.9" fill="#222">Building</text><circle cx="246" cy="232.8" r="1.7" fill="#000"/><path d="M719.6 198L801.6 165" stroke="#7a7af0" stroke-width="0.6" fill="none"/><path d="M746.7 247.6L755.6 269.8" stroke="#777" stroke-width="0.5" fill="none"/><text x="758.3" y="261.7" font-size="7.3" fill="#1d8f99">Unit weight=18 kN/m³</text><text x="758.3" y="269.5" font-size="7.3" fill="#1d8f99">Angle of friction=25 °</text><rect x="363.6" y="225.8" width="3.6" height="3.6" fill="#30d030"/><rect x="363.6" y="245.8" width="3.6" height="3.6" fill="#30d030"/><rect x="363.6" y="307.8" width="3.6" height="3.6" fill="#30d030"/><rect x="363.6" y="369.8" width="3.6" height="3.6" fill="#30d030"/><rect x="363.6" y="472.5" width="3.6" height="3.6" fill="#30d030"/><rect x="744.9" y="307.8" width="3.6" height="3.6" fill="#30d030"/><rect x="744.9" y="369.8" width="3.6" height="3.6" fill="#30d030"/><rect x="744.9" y="472.5" width="3.6" height="3.6" fill="#30d030"/><rect x="744.9" y="245.8" width="3.6" height="3.6" fill="#30d030"/><rect x="744.9" y="173.7" width="3.6" height="3.6" fill="#30d030"/><rect x="506.4" y="184.5" width="3.6" height="3.6" fill="#30d030"/><rect x="544.5" y="173.7" width="3.6" height="3.6" fill="#30d030"/><text x="758.3" y="277.2" font-size="7" fill="#1d8f99">Effective cohesion=0 kN/m²</text><path d="M746.7 309.6L757 320.6" stroke="#777" stroke-width="0.5" fill="none"/><text x="758.3" y="322.2" font-size="7" fill="#1d8f99">Unit weight=19 kN/m³</text><text x="758.3" y="330" font-size="7" fill="#1d8f99">Angle of friction=18 °</text><text x="758.3" y="337.8" font-size="7" fill="#1d8f99">Effective cohesion=10 kN/m²</text><path d="M746.7 371.6L757 382.4" stroke="#777" stroke-width="0.5" fill="none"/><text x="758.3" y="384" font-size="7" fill="#1d8f99">Unit weight=20 kN/m³</text><text x="758.3" y="391.8" font-size="7" fill="#1d8f99">Angle of friction=18 °</text><text x="758.3" y="399.6" font-size="7" fill="#1d8f99">Effective cohesion=50 kN/m²</text><path d="M746.7 474.3L757 486" stroke="#777" stroke-width="0.5" fill="none"/><text x="758.3" y="487.6" font-size="7" fill="#1d8f99">Unit weight=21 kN/m³</text><text x="758.3" y="495.4" font-size="7" fill="#1d8f99">Angle of friction=20 °</text><text x="758.3" y="503.2" font-size="7" fill="#1d8f99">Effective cohesion=12 kN/m²</text></svg><svg class="cv" width="1024" height="555" viewBox="0 0 1024 555" font-family="'Liberation Sans', sans-serif"><rect x="0" y="96.4" width="1024" height="1.6" fill="#3b5a94"/><rect x="0" y="97.5" width="1.3" height="445" fill="#6a6a6a"/><path d="M11.6 542V109.4H1024" fill="none" stroke="#555" stroke-width="0.6"/><path d="M15.28 107.8V109.4M23.84 107.8V109.4M32.4 106V109.4M40.96 107.8V109.4M49.52 107.8V109.4M58.08 107.8V109.4M66.64 107.8V109.4M75.2 106V109.4M83.76 107.8V109.4M92.32 107.8V109.4M100.88 107.8V109.4M109.44 107.8V109.4M118 106V109.4M126.56 107.8V109.4M135.12 107.8V109.4M143.68 107.8V109.4M152.24 107.8V109.4M160.8 106V109.4M169.36 107.8V109.4M177.92 107.8V109.4M186.48 107.8V109.4M195.04 107.8V109.4M203.6 106V109.4M212.16 107.8V109.4M220.72 107.8V109.4M229.28 107.8V109.4M237.84 107.8V109.4M246.4 106V109.4M254.96 107.8V109.4M263.52 107.8V109.4M272.08 107.8V109.4M280.64 107.8V109.4M289.2 106V109.4M297.76 107.8V109.4M306.32 107.8V109.4M314.88 107.8V109.4M323.44 107.8V109.4M332 106V109.4M340.56 107.8V109.4M349.12 107.8V109.4M357.68 107.8V109.4M366.24 107.8V109.4M374.8 106V109.4M383.36 107.8V109.4M391.92 107.8V109.4M400.48 107.8V109.4M409.04 107.8V109.4M417.6 106V109.4M426.16 107.8V109.4M434.72 107.8V109.4M443.28 107.8V109.4M451.84 107.8V109.4M460.4 106V109.4M468.96 107.8V109.4M477.52 107.8V109.4M486.08 107.8V109.4M494.64 107.8V109.4M503.2 106V109.4M511.76 107.8V109.4M520.32 107.8V109.4M528.88 107.8V109.4M537.44 107.8V109.4M546 106V109.4M554.56 107.8V109.4M563.12 107.8V109.4M571.68 107.8V109.4M580.24 107.8V109.4M588.8 106V109.4M597.36 107.8V109.4M605.92 107.8V109.4M614.48 107.8V109.4M623.04 107.8V109.4M631.6 106V109.4M640.16 107.8V109.4M648.72 107.8V109.4M657.28 107.8V109.4M665.84 107.8V109.4M674.4 106V109.4M682.96 107.8V109.4M691.52 107.8V109.4M700.08 107.8V109.4M708.64 107.8V109.4M717.2 106V109.4M725.76 107.8V109.4M734.32 107.8V109.4M742.88 107.8V109.4M751.44 107.8V109.4M760 106V109.4M768.56 107.8V109.4M777.12 107.8V109.4M785.68 107.8V109.4M794.24 107.8V109.4M802.8 106V109.4M811.36 107.8V109.4M819.92 107.8V109.4M828.48 107.8V109.4M837.04 107.8V109.4M845.6 106V109.4M854.16 107.8V109.4M862.72 107.8V109.4M871.28 107.8V109.4M879.84 107.8V109.4M888.4 106V109.4M896.96 107.8V109.4M905.52 107.8V109.4M914.08 107.8V109.4M922.64 107.8V109.4M931.2 106V109.4M939.76 107.8V109.4M948.32 107.8V109.4M956.88 107.8V109.4M965.44 107.8V109.4M974 106V109.4M982.56 107.8V109.4M991.12 107.8V109.4M999.68 107.8V109.4M1008.24 107.8V109.4M1016.8 106V109.4" stroke="#333" stroke-width="0.7" fill="none"/><text x="32.4" y="103.2" font-size="4.2" font-weight="bold" text-anchor="middle" fill="#222">-19.4</text><text x="75.2" y="103.2" font-size="4.2" font-weight="bold" text-anchor="middle" fill="#222">-17.7</text><text x="118" y="103.2" font-size="4.2" font-weight="bold" text-anchor="middle" fill="#222">-15.9</text><text x="160.8" y="103.2" font-size="4.2" font-weight="bold" text-anchor="middle" fill="#222">-14.1</text><text x="203.6" y="103.2" font-size="4.2" font-weight="bold" text-anchor="middle" fill="#222">-12.4</text><text x="246.4" y="103.2" font-size="4.2" font-weight="bold" text-anchor="middle" fill="#222">-10.59</text><text x="289.2" y="103.2" font-size="4.2" font-weight="bold" text-anchor="middle" fill="#222">-8.82</text><text x="332" y="103.2" font-size="4.2" font-weight="bold" text-anchor="middle" fill="#222">-7.06</text><text x="374.8" y="103.2" font-size="4.2" font-weight="bold" text-anchor="middle" fill="#222">-5.29</text><text x="417.6" y="103.2" font-size="4.2" font-weight="bold" text-anchor="middle" fill="#222">-3.53</text><text x="460.4" y="103.2" font-size="4.2" font-weight="bold" text-anchor="middle" fill="#222">-1.76</text><text x="503.2" y="103.2" font-size="4.2" font-weight="bold" text-anchor="middle" fill="#222">0.00</text><text x="546" y="103.2" font-size="4.2" font-weight="bold" text-anchor="middle" fill="#222">1.76</text><text x="588.8" y="103.2" font-size="4.2" font-weight="bold" text-anchor="middle" fill="#222">3.53</text><text x="631.6" y="103.2" font-size="4.2" font-weight="bold" text-anchor="middle" fill="#222">5.29</text><text x="674.4" y="103.2" font-size="4.2" font-weight="bold" text-anchor="middle" fill="#222">7.06</text><text x="717.2" y="103.2" font-size="4.2" font-weight="bold" text-anchor="middle" fill="#222">8.82</text><text x="760" y="103.2" font-size="4.2" font-weight="bold" text-anchor="middle" fill="#222">10.59</text><text x="802.8" y="103.2" font-size="4.2" font-weight="bold" text-anchor="middle" fill="#222">12.4</text><text x="845.6" y="103.2" font-size="4.2" font-weight="bold" text-anchor="middle" fill="#222">14.1</text><text x="888.4" y="103.2" font-size="4.2" font-weight="bold" text-anchor="middle" fill="#222">15.9</text><text x="931.2" y="103.2" font-size="4.2" font-weight="bold" text-anchor="middle" fill="#222">17.7</text><text x="974" y="103.2" font-size="4.2" font-weight="bold" text-anchor="middle" fill="#222">19.4</text><text x="1016.8" y="103.2" font-size="4.2" font-weight="bold" text-anchor="middle" fill="#222">21.2</text><text x="2" y="104.6" font-size="5.6" fill="#222">M</text><text x="9.4" y="114.1" font-size="4.9" font-weight="bold" text-anchor="end" fill="#222">3.13</text><path d="M9.4 110.8v4.5" stroke="#333" stroke-width="0.5"/><text x="9.4" y="136.3" font-size="4.9" font-weight="bold" text-anchor="end" fill="#222">2.09</text><path d="M9.4 133v4.5" stroke="#333" stroke-width="0.5"/><text x="9.4" y="158.5" font-size="4.9" font-weight="bold" text-anchor="end" fill="#222">1.04</text><path d="M9.4 155.2v4.5" stroke="#333" stroke-width="0.5"/><text x="9.4" y="180.7" font-size="4.9" font-weight="bold" text-anchor="end" fill="#222">0.0</text><path d="M9.4 177.4v4.5" stroke="#333" stroke-width="0.5"/><text x="9.4" y="202.9" font-size="4.9" font-weight="bold" text-anchor="end" fill="#222">-1.04</text><path d="M9.4 199.6v4.5" stroke="#333" stroke-width="0.5"/><text x="9.4" y="225.1" font-size="4.9" font-weight="bold" text-anchor="end" fill="#222">-2.09</text><path d="M9.4 221.8v4.5" stroke="#333" stroke-width="0.5"/><text x="9.4" y="247.3" font-size="4.9" font-weight="bold" text-anchor="end" fill="#222">-3.13</text><path d="M9.4 244v4.5" stroke="#333" stroke-width="0.5"/><text x="9.4" y="269.5" font-size="4.9" font-weight="bold" text-anchor="end" fill="#222">-4.17</text><path d="M9.4 266.2v4.5" stroke="#333" stroke-width="0.5"/><text x="9.4" y="291.7" font-size="4.9" font-weight="bold" text-anchor="end" fill="#222">-5.22</text><path d="M9.4 288.4v4.5" stroke="#333" stroke-width="0.5"/><text x="9.4" y="313.9" font-size="4.9" font-weight="bold" text-anchor="end" fill="#222">-6.26</text><path d="M9.4 310.6v4.5" stroke="#333" stroke-width="0.5"/><text x="9.4" y="336.1" font-size="4.9" font-weight="bold" text-anchor="end" fill="#222">-7.3</text><path d="M9.4 332.8v4.5" stroke="#333" stroke-width="0.5"/><text x="9.4" y="358.3" font-size="4.9" font-weight="bold" text-anchor="end" fill="#222">-8.35</text><path d="M9.4 355v4.5" stroke="#333" stroke-width="0.5"/><text x="9.4" y="380.5" font-size="4.9" font-weight="bold" text-anchor="end" fill="#222">-9.39</text><path d="M9.4 377.2v4.5" stroke="#333" stroke-width="0.5"/><text x="9.4" y="402.7" font-size="4.9" font-weight="bold" text-anchor="end" fill="#222">-10.43</text><path d="M9.4 399.4v4.5" stroke="#333" stroke-width="0.5"/><text x="9.4" y="424.9" font-size="4.9" font-weight="bold" text-anchor="end" fill="#222">-11.48</text><path d="M9.4 421.6v4.5" stroke="#333" stroke-width="0.5"/><text x="9.4" y="447.1" font-size="4.9" font-weight="bold" text-anchor="end" fill="#222">-12.52</text><path d="M9.4 443.8v4.5" stroke="#333" stroke-width="0.5"/><text x="9.4" y="469.3" font-size="4.9" font-weight="bold" text-anchor="end" fill="#222">-13.56</text><path d="M9.4 466v4.5" stroke="#333" stroke-width="0.5"/><text x="9.4" y="491.5" font-size="4.9" font-weight="bold" text-anchor="end" fill="#222">-14.61</text><path d="M9.4 488.2v4.5" stroke="#333" stroke-width="0.5"/><text x="9.4" y="513.7" font-size="4.9" font-weight="bold" text-anchor="end" fill="#222">-15.65</text><path d="M9.4 510.4v4.5" stroke="#333" stroke-width="0.5"/><text x="9.4" y="535.9" font-size="4.9" font-weight="bold" text-anchor="end" fill="#222">-16.7</text><path d="M9.4 532.6v4.5" stroke="#333" stroke-width="0.5"/><path d="M8.6 110.6H11.6M10 115.04H11.6M10 119.48H11.6M10 123.92H11.6M10 128.36H11.6M8.6 132.8H11.6M10 137.24H11.6M10 141.68H11.6M10 146.12H11.6M10 150.56H11.6M8.6 155H11.6M10 159.44H11.6M10 163.88H11.6M10 168.32H11.6M10 172.76H11.6M8.6 177.2H11.6M10 181.64H11.6M10 186.08H11.6M10 190.52H11.6M10 194.96H11.6M8.6 199.4H11.6M10 203.84H11.6M10 208.28H11.6M10 212.72H11.6M10 217.16H11.6M8.6 221.6H11.6M10 226.04H11.6M10 230.48H11.6M10 234.92H11.6M10 239.36H11.6M8.6 243.8H11.6M10 248.24H11.6M10 252.68H11.6M10 257.12H11.6M10 261.56H11.6M8.6 266H11.6M10 270.44H11.6M10 274.88H11.6M10 279.32H11.6M10 283.76H11.6M8.6 288.2H11.6M10 292.64H11.6M10 297.08H11.6M10 301.52H11.6M10 305.96H11.6M8.6 310.4H11.6M10 314.84H11.6M10 319.28H11.6M10 323.72H11.6M10 328.16H11.6M8.6 332.6H11.6M10 337.04H11.6M10 341.48H11.6M10 345.92H11.6M10 350.36H11.6M8.6 354.8H11.6M10 359.24H11.6M10 363.68H11.6M10 368.12H11.6M10 372.56H11.6M8.6 377H11.6M10 381.44H11.6M10 385.88H11.6M10 390.32H11.6M10 394.76H11.6M8.6 399.2H11.6M10 403.64H11.6M10 408.08H11.6M10 412.52H11.6M10 416.96H11.6M8.6 421.4H11.6M10 425.84H11.6M10 430.28H11.6M10 434.72H11.6M10 439.16H11.6M8.6 443.6H11.6M10 448.04H11.6M10 452.48H11.6M10 456.92H11.6M10 461.36H11.6M8.6 465.8H11.6M10 470.24H11.6M10 474.68H11.6M10 479.12H11.6M10 483.56H11.6M8.6 488H11.6M10 492.44H11.6M10 496.88H11.6M10 501.32H11.6M10 505.76H11.6M8.6 510.2H11.6M10 514.64H11.6M10 519.08H11.6M10 523.52H11.6M10 527.96H11.6M8.6 532.4H11.6M10 536.84H11.6M10 541.28H11.6" stroke="#333" stroke-width="0.7" fill="none"/></svg><div class="top"><svg class="qa" width="145" height="14" viewBox="0 0 145 14"><rect x="4.6" y="2.6" width="8" height="7.6" fill="#c9d29a" stroke="#7a6a3a" stroke-width="0.5"/><rect x="4.6" y="2.2" width="8" height="2" fill="#8a4a2a"/><rect x="5.6" y="5.2" width="6" height="1.2" fill="#4a8a3a"/><rect x="5.6" y="7.4" width="6" height="1.2" fill="#b08040"/><rect x="18.4" y="2.6" width="6.8" height="7" rx="0.6" fill="#8a3fb0"/><rect x="19.8" y="2.6" width="4" height="2.6" fill="#f0e8f6"/><rect x="20" y="6.8" width="3.6" height="2.8" fill="#d9c6e6"/><path d="M29.4 2.2h4l1.6 1.6v6h-5.6z" fill="#fafafa" stroke="#666" stroke-width="0.6"/><circle cx="34.4" cy="7" r="1.8" fill="#dfe8f5" stroke="#555" stroke-width="0.6"/><path d="M35.6 8.4l1.6 1.6" stroke="#d07020" stroke-width="0.9"/><path d="M42 4.6h3.4a2.3 2.3 0 0 1 0 4.6h-1.4" fill="none" stroke="#2b62b5" stroke-width="1.2"/><path d="M40.6 4.6l3-2.4v4.8z" fill="#2b62b5"/><path d="M59 4.6h-3.4a2.3 2.3 0 0 0 0 4.6h1.4" fill="none" stroke="#2b62b5" stroke-width="1.2"/><path d="M60.4 4.6l-3-2.4v4.8z" fill="#2b62b5"/><circle cx="67.5" cy="5.6" r="3" fill="#eef2f8" stroke="#4f5a6c" stroke-width="1"/><path d="M69.4 7.8l2.3 2.6" stroke="#5c6b82" stroke-width="1.3"/><path d="M64.8 5.6h5.4M67.5 2.9v5.4" stroke="#5c6b82" stroke-width="0.6"/><circle cx="79.5" cy="5.6" r="3" fill="#eef2f8" stroke="#4f5a6c" stroke-width="1"/><path d="M81.4 7.8l2.3 2.6" stroke="#5c6b82" stroke-width="1.3"/><path d="M78 5.6h3M79.5 4.1v3" stroke="#2b579a" stroke-width="0.7"/><circle cx="91.5" cy="5.6" r="3" fill="#eef2f8" stroke="#4f5a6c" stroke-width="1"/><path d="M93.4 7.8l2.3 2.6" stroke="#5c6b82" stroke-width="1.3"/><path d="M90 5.6h3" stroke="#2b579a" stroke-width="0.7"/><rect x="99.4" y="2.6" width="6.4" height="4" fill="#3b6bb5"/><circle cx="103.5" cy="5.6" r="3" fill="#eef2f8" stroke="#4f5a6c" stroke-width="1"/><path d="M105.4 7.8l2.3 2.6" stroke="#5c6b82" stroke-width="1.3"/><path d="M111.6 3l3 -1v3z" fill="#3b6bb5"/><circle cx="115.5" cy="5.6" r="3" fill="#eef2f8" stroke="#4f5a6c" stroke-width="1"/><path d="M117.4 7.8l2.3 2.6" stroke="#5c6b82" stroke-width="1.3"/><path d="M125.2 9.8v-3.4l-1-1.4 0.6-0.5 1.2 1v-2.6h1v2.2h0.5v-2.8h1v2.8h0.5v-2.4h1v2.6h0.5v-1.6h0.9v4.2l-0.8 1.9z" fill="#f2f2f2" stroke="#9a9a9a" stroke-width="0.5"/><path d="M134.8 5.6h2.6l-1.3 1.5z" fill="#444"/></svg><div class="title">C:\geostru\SPW\Examples\ExDefault.spw</div><svg class="abs" style="left:980px;top:3px" width="42" height="10" viewBox="0 0 42 10"><path d="M3 5.600h5.200" stroke="#2a2a2a" stroke-width="0.9"/><path d="M17.800 4.200h4v3.800h-4zM19.200 4.200v-1.600h4v3.800h-1.400" fill="none" stroke="#2a2a2a" stroke-width="0.8"/><path d="M34 2.400l4.800 4.800M38.800 2.400l-4.800 4.800" stroke="#2a2a2a" stroke-width="0.9"/></svg><div class="tab file" style="left:0px;width:30.4px"><span>FILE</span></div><div class="tab" style="left:33px;width:41px"><span>ARCHIVES</span></div><div class="tab" style="left:76.2px;width:31px"><span>DATA</span></div><div class="tab" style="left:110px;width:23.4px"><span>EDIT</span></div><div class="tab" style="left:139px;width:23px"><span>VIEW</span></div><div class="tab act" style="left:168px;width:31px"><span>TOOLS</span></div><div class="tab" style="left:201px;width:61px"><span>COMPUTATION</span></div><div class="tab" style="left:262px;width:40px"><span>OUTPUT</span></div><div class="tab" style="left:305px;width:12px"><span>?</span></div><div class="pref">Preferences</div></div><div class="ribbon"><svg width="0" height="0" style="position:absolute"><defs><linearGradient id="sky" x1="0" x2="1" y1="0" y2="1"><stop offset="0" stop-color="#ffffff"/><stop offset="1" stop-color="#bcdcf8"/></linearGradient></defs></svg><div class="ri hl" style="left:3.9px;width:28.6px"><svg style="top:0px;margin-left:-9px" width="18" height="19" viewBox="0 0 18 19" ><path d="M3 2l8.600 9.600-3.600 0.400-1.400 3.600z" fill="#fff" stroke="#3a66c8" stroke-width="0.900"/><circle cx="6" cy="6.400" r="2.400" fill="#fff" stroke="#9ab" stroke-width="0.600"/><circle cx="14" cy="12" r="2.200" fill="#f01818"/></svg><div class="lb">Selection</div></div><div class="ri" style="left:33.7px;width:20px"><svg style="top:0px;margin-left:-9px" width="18" height="19" viewBox="0 0 18 19" ><text x="9" y="14" font-size="13" font-weight="bold" text-anchor="middle" fill="#111" font-family="'Liberation Sans', sans-serif">Aa</text></svg><div class="lb">Text</div></div><div class="sep" style="left:55.500px"></div><div class="ri" style="left:58.2px;width:20px"><svg style="top:0px;margin-left:-9px" width="18" height="19" viewBox="0 0 18 19" ><path d="M2 2l14 14" stroke="#111" stroke-width="1.400"/></svg><div class="lb">Line</div></div><div class="ri" style="left:81.7px;width:26px"><svg style="top:0px;margin-left:-9px" width="18" height="19" viewBox="0 0 18 19" ><rect x="1.600" y="2.600" width="15" height="12.600" fill="url(#sky)" stroke="#8a8f98" stroke-width="1"/></svg><div class="lb">Rectangle</div></div><div class="ri" style="left:111px;width:22px"><svg style="top:0px;margin-left:-9px" width="18" height="19" viewBox="0 0 18 19" ><circle cx="9" cy="9" r="7.400" fill="url(#sky)" stroke="#6a7078" stroke-width="1"/></svg><div class="lb">Circle</div></div><div class="ri" style="left:135px;width:22px"><svg style="top:0px;margin-left:-9px" width="18" height="19" viewBox="0 0 18 19" ><path d="M9 2.400l7 5.200-7 8.400-7-8.400z" fill="url(#sky)" stroke="#6a7078" stroke-width="1"/><path d="M2 7.600h14" stroke="#8a9098" stroke-width="0.600"/></svg><div class="lb">Polygon</div></div><div class="sep" style="left:160.300px"></div><div class="ri" style="left:163.2px;width:34px"><svg style="top:0px;margin-left:-9px" width="18" height="19" viewBox="0 0 18 19" ><rect x="4.600" y="4.600" width="11" height="11.400" fill="#6a5a20"/><rect x="2.600" y="2.400" width="11.400" height="11.800" fill="#f7d21e" stroke="#d8a810" stroke-width="0.800"/></svg><div class="lb">Foreground</div></div><div class="ri" style="left:198.9px;width:34px"><svg style="top:0px;margin-left:-9px" width="18" height="19" viewBox="0 0 18 19" ><rect x="2" y="1.600" width="8" height="8" fill="#555" /><rect x="5.600" y="5.200" width="9" height="9" fill="#f3d060" stroke="#d0a020" stroke-width="0.600"/><rect x="11" y="11" width="5.600" height="5.600" fill="#444"/></svg><div class="lb">Background</div></div><div class="sep" style="left:235.500px"></div><div class="ri" style="left:237.4px;width:26px"><svg style="top:0px;margin-left:-9px" width="18" height="19" viewBox="0 0 18 19" ><rect x="2" y="7" width="14" height="4.600" fill="#f8e890" stroke="#d8b020" stroke-width="0.800"/><path d="M2 4.600v4M16 4.600v4" stroke="#e03030" stroke-width="1.200"/></svg><div class="lb">Distance</div></div><div class="sep" style="left:265.700px"></div><div class="ri" style="left:267.5px;width:28px"><svg style="top:0px;margin-left:-9px" width="18" height="19" viewBox="0 0 18 19" ><path d="M5.200 17v-5.400l-2-2.600 1.200-1 2.200 2v-6h1.800v4.600h0.800v-6h1.800v6h0.800v-5.200h1.800v5.400h0.800v-3.400h1.700v8.400l-1.400 3.200z" fill="#f6f6f6" stroke="#555" stroke-width="0.800"/></svg><div class="lb">Move<br>drawings</div></div><div class="sep" style="left:299.500px"></div><div class="ri" style="left:301.4px;width:44px"><svg style="top:0px;margin-left:-9px" width="18" height="19" viewBox="0 0 18 19" ><rect x="2" y="2" width="12" height="10" fill="#f2f6fb" stroke="#7a8aa0" stroke-width="0.800"/><rect x="2" y="2" width="12" height="2.400" fill="#5b86c8"/><path d="M9.200 17v-3.400l-1.400-1.800 0.900-0.700 1.500 1.400v-4h1.200v3h0.600v-3.600h1.200v3.600h0.600v-3h1.200v3.400h0.500v-2h1.100v5l-0.900 2.100z" fill="#f6f6f6" stroke="#555" stroke-width="0.600"/></svg><div class="lb">Replace<br>drawings layout</div></div><div class="gsep" style="left:348.800px"></div><div class="abs sx" style="left:354.300px;top:19px;font-size:7.200px;line-height:8px;color:#161616">Selection grip</div><div class="abs" style="left:394px;top:16.400px;width:37.700px;height:12.500px;border:0.800px solid #ababab;box-sizing:border-box;font-size:7.200px;line-height:10.600px;padding-left:1.600px;color:#222"><span class="sx">0.05</span></div><div class="gsep" style="left:435.500px"></div><div class="gl" style="left:176px">Tools</div><div class="gl" style="left:394px">Selection grip</div></div><div class="doctab"><span>ExDefault</span></div><div class="status" style="top:541.2px;height:13.8px;line-height:13.6px"><div class="sbox" style="left:13.800px;width:41.200px;text-align:center;padding:0;font-size:5.85px">18.8 , 0.01</div><svg class="abs" style="left:59px;top:2.400px" width="8" height="8" viewBox="0 0 8 8"><circle cx="4" cy="4" r="3.700" fill="#3f74c6" stroke="#234a86" stroke-width="0.400"/><text x="4" y="6.100" font-size="5.600" font-weight="bold" text-anchor="middle" fill="#fff" font-family="'Liberation Sans', sans-serif">?</text></svg><div class="sbox" style="left:73.200px;width:307.400px;font-size:6.1px">D=11.96 a=62.47°</div><svg class="abs" style="left:384.400px;top:2.800px" width="8" height="8" viewBox="0 0 8 8"><rect x="0.300" y="0.300" width="6.800" height="6.800" fill="#e9edf4" stroke="#8a96a8" stroke-width="0.500"/><path d="M1 6.400l5.400-5.400M2.400 0.400v6.600M0.400 4.800h6.600" stroke="#8a96a8" stroke-width="0.500"/></svg><span class="abs" style="left:394.300px">GRID</span><span class="abs" style="left:412.800px;color:#e8eefa;font-weight:bold;transform:scaleX(.875)">SPW 2016.31.3.611</span><svg class="abs" style="left:474.600px;top:2.600px" width="9" height="9" viewBox="0 0 9 9"><circle cx="3.600" cy="3.400" r="2.900" fill="#d8dde6" stroke="#9a8a6a" stroke-width="0.500"/><path d="M1.600 3.400h4" stroke="#6a6a6a" stroke-width="0.600"/><path d="M6 6l1.400 2.400" stroke="#4a9ae0" stroke-width="0.800"/></svg><span class="abs" style="left:485.200px">SELECT LANGUAGE-EN</span><span class="abs" style="left:560.800px">NUM</span><span class="abs" style="left:581.900px;color:#5877ad">BS</span></div><div class="abs" style="left:854.52px;top:99.72px;width:169.48px;height:441.89px;background:#f0f0f0;border-left:3.400px solid #cfe0f6;box-sizing:border-box;font-size:5.600px;color:#222;line-height:7px;white-space:nowrap"><div class="abs" style="left:0;top:0;width:166.08px;height:11.17px;background:linear-gradient(#dbe8fa,#a8c6ee);"></div><div class="abs" style="left:4.500px;top:2.200px;">Groundwater</div><div class="abs" style="left:147.53px;top:0.86px;font-size:5px;font-weight:bold;top:2.400px">&#9662; &#10005;</div><div class="abs" style="left:6.36px;top:21.48px;font-weight:bold;margin-top:-2.200px">Groundwater</div><div class="abs" style="left:40.97px;top:21.48px;width:107.92px;height:0.800px;background:#cfcfcf"></div><div class="abs" style="left:12.03px;top:34.16px;margin-top:-2.200px">Upstream groundwater depth</div><div class="abs" style="left:106.9px;top:29.86px;margin-top:-1.800px;width:27.24px;height:8.81px;background:#fff;border:0.800px solid #b4b4b4;box-sizing:border-box;text-align:right;padding:0 2px;line-height:7.21px">0.5</div><div class="abs" style="left:138.91px;top:34.16px;margin-top:-2.200px">[m]</div><div class="abs" style="left:12.03px;top:46.19px;margin-top:-2.200px">Downstream groundwater depth</div><div class="abs" style="left:106.9px;top:41.89px;margin-top:-1.800px;width:27.24px;height:8.81px;background:#fff;border:0.800px solid #b4b4b4;box-sizing:border-box;text-align:right;padding:0 2px;line-height:7.21px">2.5</div><div class="abs" style="left:138.91px;top:46.19px;margin-top:-2.200px">[m]</div><div class="abs" style="left:13.62px;top:58.43px;margin-top:-2.400px;margin-left:-1px;width:6px;height:6px;background:#fff;border:0.700px solid #8a8a8a;box-sizing:border-box;font-size:5px;line-height:5px;text-align:center">&#10003;</div><div class="abs" style="left:20.43px;top:58.43px;margin-top:-2.200px">Siphoning check</div><div class="abs" style="left:96.69px;top:58.43px;margin-top:-2.200px">Fs</div><div class="abs" style="left:106.9px;top:53.92px;margin-top:-1.800px;width:27.24px;height:8.81px;background:#fff;border:0.800px solid #b4b4b4;box-sizing:border-box;text-align:right;padding:0 2px;line-height:7.21px">1.2</div><div class="abs" style="left:13.62px;top:71.11px;margin-top:-2.400px;margin-left:-1px;width:6px;height:6px;background:#fff;border:0.700px solid #8a8a8a;box-sizing:border-box;font-size:5px;line-height:5px;text-align:center">&#10003;</div><div class="abs" style="left:20.43px;top:71.11px;margin-top:-2.200px">Activate presence of groundwater in the phase</div><div class="abs" style="left:6.36px;top:87.43px;font-weight:bold;margin-top:-2.200px">Flow grid</div><div class="abs" style="left:35.3px;top:87.43px;width:113.6px;height:0.800px;background:#cfcfcf"></div><div class="abs" style="left:12.03px;top:100.11px;margin-top:-2.200px">Thickness impermeable layer</div><div class="abs" style="left:106.22px;top:97.1px;margin-top:-1.800px;width:29.51px;height:9.02px;background:#fff;border:0.800px solid #b4b4b4;box-sizing:border-box;text-align:left;padding:0 2px;line-height:7.42px">5</div><div class="abs" style="left:138.91px;top:100.11px;margin-top:-2.200px">[m]</div><div class="abs" style="left:12.03px;top:114.93px;margin-top:-2.200px">Flowlines spacing</div><div class="abs" style="left:106.22px;top:110.42px;margin-top:-1.800px;width:22.24px;height:9.45px;background:#fff;border:0.800px solid #b4b4b4;box-sizing:border-box;text-align:left;padding:0 2px;line-height:7.85px">1.5</div><div class="abs" style="left:128.47px;top:110.42px;margin-top:-1.800px;width:7.94px;height:9.45px;background:#fff;border:0.800px solid #b4b4b4;box-sizing:border-box;text-align:right;padding:0 2px;line-height:7.85px"></div><div class="abs" style="left:138.91px;top:113.43px;margin-top:-2.200px">[m]</div><div class="abs" style="left:13.62px;top:134.26px;margin-top:-2.400px;margin-left:-1px;width:6px;height:6px;background:#fff;border:0.700px solid #8a8a8a;box-sizing:border-box;font-size:5px;line-height:5px;text-align:center">&#10003;</div><div class="abs" style="left:20.89px;top:134.26px;margin-top:-2.200px">New Mesh</div><div class="abs" style="left:75.81px;top:134.26px;margin-top:-2.400px;margin-left:-1px;width:6px;height:6px;background:#fff;border:0.700px solid #8a8a8a;box-sizing:border-box;font-size:5px;line-height:5px;text-align:center">&#10003;</div><div class="abs" style="left:83.07px;top:134.26px;margin-top:-2.200px">New Flowlines</div><div class="abs" style="left:11.58px;top:154.03px;margin-top:-2.200px">Color: mesh, flowlines</div><div class="abs" style="left:105.77px;top:148.66px;width:19.06px;height:10.31px;background:#fafafa;border:0.700px solid #c4c4c4;box-sizing:border-box"><div class="abs" style="left:2.400px;top:2px;width:6.500px;height:5.600px;background:#1030d0"></div><div class="abs" style="left:10.500px;top:1.400px;font-size:5px">&#9662;</div></div><div class="abs" style="left:128.92px;top:148.66px;width:18.61px;height:10.31px;background:#fafafa;border:0.700px solid #c4c4c4;box-sizing:border-box"><div class="abs" style="left:2.400px;top:2px;width:6.500px;height:5.600px;background:#000"></div><div class="abs" style="left:10.500px;top:1.400px;font-size:5px">&#9662;</div></div><div class="abs" style="left:7.49px;top:172.72px;margin-top:-2.400px;margin-left:-1px;width:6px;height:6px;background:#fff;border:0.700px solid #8a8a8a;box-sizing:border-box;font-size:5px;line-height:5px;text-align:center">&#10003;</div><div class="abs" style="left:14.3px;top:172.72px;margin-top:-2.200px">Generate flow grid</div><div class="abs" style="left:34.05px;top:187.33px;width:22.7px;height:9.45px;background:#fdfdfd;border:0.800px solid #b0b0b0;box-sizing:border-box;text-align:center;line-height:10.65px"><b><i>I</i></b></div><div class="abs" style="left:59.92px;top:187.33px;width:31.55px;height:9.45px;background:#fdfdfd;border:0.800px solid #b0b0b0;box-sizing:border-box;text-align:center;line-height:10.65px">Apply</div><div class="abs" style="left:94.19px;top:187.33px;width:31.09px;height:9.45px;background:#fdfdfd;border:0.800px solid #b0b0b0;box-sizing:border-box;text-align:center;line-height:10.65px">Close</div><div class="abs" style="left:128.24px;top:187.33px;width:22.02px;height:9.45px;background:#fdfdfd;border:0.800px solid #b0b0b0;box-sizing:border-box;text-align:center;line-height:10.65px">?</div></div><div class="abs" style="left:0;top:29px;width:2.2px;height:67px;background:#d3deee"></div></div></div></div></div></body></html>
